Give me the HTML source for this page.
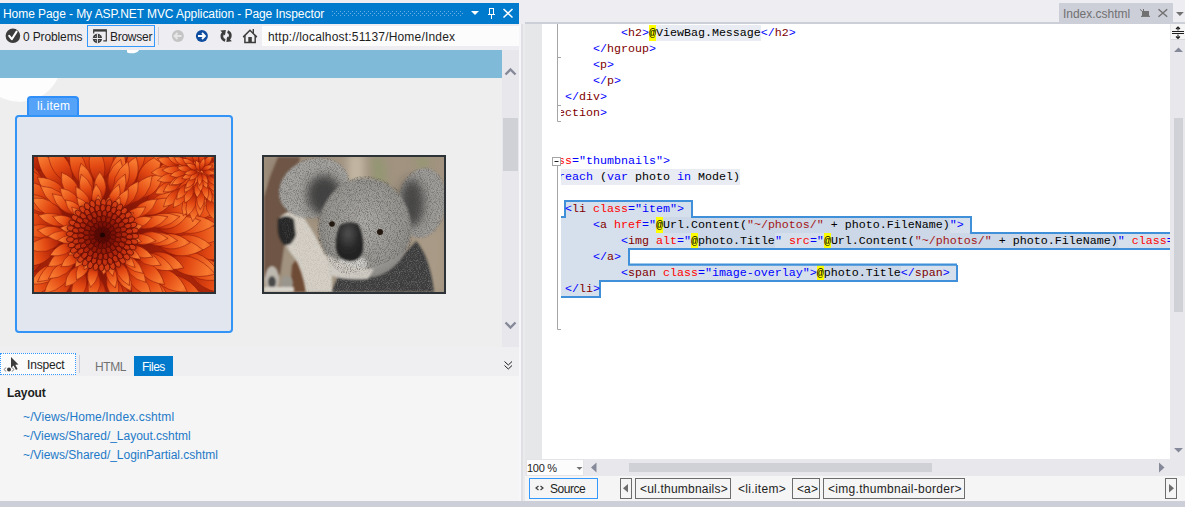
<!DOCTYPE html>
<html><head><meta charset="utf-8">
<style>
*{margin:0;padding:0;box-sizing:border-box}
html,body{width:1185px;height:507px;overflow:hidden;background:#eeeef2;font-family:"Liberation Sans",sans-serif;font-size:12px;color:#1e1e1e}
.a{position:absolute}
.t{position:absolute;white-space:nowrap;line-height:12px;font-size:12px;margin-top:1px}
svg{position:absolute;overflow:visible}
.code{position:absolute;font-family:"Liberation Mono",monospace;font-size:11.67px;line-height:16px;white-space:pre;color:#000}
.dl{color:#0000ff}.el{color:#800000}.at{color:#ff0000}.av{color:#0000ff}.kw{color:#0000ff}.st{color:#a31515}.bk{color:#000}.rg{color:#000}
.rz{color:#000}
</style></head><body>

<!-- ================= LEFT PANEL ================= -->
<div class="a" style="left:0;top:3px;width:519px;height:21px;background:#007acc"></div>
<div class="t" style="left:3px;top:7px;color:#fff;letter-spacing:-0.07px">Home Page - My ASP.NET MVC Application - Page Inspector</div>
<!-- grip -->
<svg style="left:0;top:0" width="519" height="24"><g fill="#69afe3"><rect x="332" y="11" width="1" height="1"/><rect x="336" y="11" width="1" height="1"/><rect x="340" y="11" width="1" height="1"/><rect x="344" y="11" width="1" height="1"/><rect x="348" y="11" width="1" height="1"/><rect x="352" y="11" width="1" height="1"/><rect x="356" y="11" width="1" height="1"/><rect x="360" y="11" width="1" height="1"/><rect x="364" y="11" width="1" height="1"/><rect x="368" y="11" width="1" height="1"/><rect x="372" y="11" width="1" height="1"/><rect x="376" y="11" width="1" height="1"/><rect x="380" y="11" width="1" height="1"/><rect x="384" y="11" width="1" height="1"/><rect x="388" y="11" width="1" height="1"/><rect x="392" y="11" width="1" height="1"/><rect x="396" y="11" width="1" height="1"/><rect x="400" y="11" width="1" height="1"/><rect x="404" y="11" width="1" height="1"/><rect x="408" y="11" width="1" height="1"/><rect x="412" y="11" width="1" height="1"/><rect x="416" y="11" width="1" height="1"/><rect x="420" y="11" width="1" height="1"/><rect x="424" y="11" width="1" height="1"/><rect x="428" y="11" width="1" height="1"/><rect x="432" y="11" width="1" height="1"/><rect x="436" y="11" width="1" height="1"/><rect x="440" y="11" width="1" height="1"/><rect x="444" y="11" width="1" height="1"/><rect x="448" y="11" width="1" height="1"/><rect x="452" y="11" width="1" height="1"/><rect x="456" y="11" width="1" height="1"/><rect x="460" y="11" width="1" height="1"/><rect x="334" y="13" width="1" height="1"/><rect x="338" y="13" width="1" height="1"/><rect x="342" y="13" width="1" height="1"/><rect x="346" y="13" width="1" height="1"/><rect x="350" y="13" width="1" height="1"/><rect x="354" y="13" width="1" height="1"/><rect x="358" y="13" width="1" height="1"/><rect x="362" y="13" width="1" height="1"/><rect x="366" y="13" width="1" height="1"/><rect x="370" y="13" width="1" height="1"/><rect x="374" y="13" width="1" height="1"/><rect x="378" y="13" width="1" height="1"/><rect x="382" y="13" width="1" height="1"/><rect x="386" y="13" width="1" height="1"/><rect x="390" y="13" width="1" height="1"/><rect x="394" y="13" width="1" height="1"/><rect x="398" y="13" width="1" height="1"/><rect x="402" y="13" width="1" height="1"/><rect x="406" y="13" width="1" height="1"/><rect x="410" y="13" width="1" height="1"/><rect x="414" y="13" width="1" height="1"/><rect x="418" y="13" width="1" height="1"/><rect x="422" y="13" width="1" height="1"/><rect x="426" y="13" width="1" height="1"/><rect x="430" y="13" width="1" height="1"/><rect x="434" y="13" width="1" height="1"/><rect x="438" y="13" width="1" height="1"/><rect x="442" y="13" width="1" height="1"/><rect x="446" y="13" width="1" height="1"/><rect x="450" y="13" width="1" height="1"/><rect x="454" y="13" width="1" height="1"/><rect x="458" y="13" width="1" height="1"/><rect x="462" y="13" width="1" height="1"/><rect x="332" y="15" width="1" height="1"/><rect x="336" y="15" width="1" height="1"/><rect x="340" y="15" width="1" height="1"/><rect x="344" y="15" width="1" height="1"/><rect x="348" y="15" width="1" height="1"/><rect x="352" y="15" width="1" height="1"/><rect x="356" y="15" width="1" height="1"/><rect x="360" y="15" width="1" height="1"/><rect x="364" y="15" width="1" height="1"/><rect x="368" y="15" width="1" height="1"/><rect x="372" y="15" width="1" height="1"/><rect x="376" y="15" width="1" height="1"/><rect x="380" y="15" width="1" height="1"/><rect x="384" y="15" width="1" height="1"/><rect x="388" y="15" width="1" height="1"/><rect x="392" y="15" width="1" height="1"/><rect x="396" y="15" width="1" height="1"/><rect x="400" y="15" width="1" height="1"/><rect x="404" y="15" width="1" height="1"/><rect x="408" y="15" width="1" height="1"/><rect x="412" y="15" width="1" height="1"/><rect x="416" y="15" width="1" height="1"/><rect x="420" y="15" width="1" height="1"/><rect x="424" y="15" width="1" height="1"/><rect x="428" y="15" width="1" height="1"/><rect x="432" y="15" width="1" height="1"/><rect x="436" y="15" width="1" height="1"/><rect x="440" y="15" width="1" height="1"/><rect x="444" y="15" width="1" height="1"/><rect x="448" y="15" width="1" height="1"/><rect x="452" y="15" width="1" height="1"/><rect x="456" y="15" width="1" height="1"/><rect x="460" y="15" width="1" height="1"/></g></svg>
<svg style="left:0;top:0" width="519" height="24">
  <path d="M471 11 H479 L475 15 Z" fill="#fff"/>
  <rect x="489.5" y="8.5" width="4" height="6" fill="none" stroke="#fff" stroke-width="1"/>
  <path d="M488 14.5 H495 M491.5 15 V19" stroke="#fff" stroke-width="1"/>
  <path d="M503.5 9 L512.5 17.5 M512.5 9 L503.5 17.5" stroke="#fff" stroke-width="1.5"/>
</svg>

<!-- toolbar -->
<svg style="left:0;top:24px" width="262" height="26">
  <circle cx="12.9" cy="11.8" r="7.3" fill="#3c3c3c"/>
  <path d="M9.2 11.8 L11.8 15.2 L16.6 7.6" stroke="#fff" stroke-width="2" fill="none" stroke-linecap="round" stroke-linejoin="round"/>
  <!-- browser icon -->
  <rect x="93.1" y="5.2" width="13.8" height="2.4" fill="#3c3c3c"/>
  <path d="M93.7 7 V9.6 M106.3 7 V16.8 H103.3" stroke="#3c3c3c" stroke-width="1.2" fill="none"/>
  <circle cx="97.4" cy="14.5" r="4.7" fill="#3c3c3c"/>
  <path d="M92.7 14.5 H102.1 M97.4 9.8 V19.2" stroke="#eeeef2" stroke-width="1"/>
  <path d="M95 12 L95.6 12.6 M99.8 12 L99.2 12.6 M95 17 L95.6 16.4 M99.8 17 L99.2 16.4" stroke="#eeeef2" stroke-width="0.8"/>
  <line x1="158.5" y1="3" x2="158.5" y2="21" stroke="#cccedb" stroke-width="1"/>
  <!-- back -->
  <circle cx="177.9" cy="12" r="6" fill="#c4c4c4"/>
  <path d="M181.5 12 H175 M177.5 9 L174.5 12 L177.5 15" stroke="#e6e6e6" stroke-width="1.8" fill="none"/>
  <!-- forward -->
  <circle cx="201.9" cy="12" r="6" fill="#0e4d9f"/>
  <path d="M198 12 H204.5 M202 9 L205 12 L202 15" stroke="#fff" stroke-width="1.8" fill="none"/>
  <!-- refresh -->
  <path d="M224.6 8.2 A4.3 4.3 0 0 0 225.2 16.4" stroke="#3c3c3c" stroke-width="2.7" fill="none"/>
  <path d="M220.3 6.6 L225.9 6.1 L224.9 11.6 Z" fill="#3c3c3c"/>
  <path d="M227.6 7.4 A4.3 4.3 0 0 1 227.0 15.6" stroke="#3c3c3c" stroke-width="2.7" fill="none"/>
  <path d="M226.3 17.9 L231.9 17.3 L227.3 12.4 Z" fill="#3c3c3c"/>
  <!-- home -->
  <path d="M243.6 12.6 L250 6.2 L256.4 12.6" stroke="#3c3c3c" stroke-width="1.5" fill="none" stroke-linecap="round"/>
  <path d="M244.9 11.5 V18.5 H255.2 V11.5" stroke="#3c3c3c" stroke-width="1.5" fill="none"/>
  <rect x="248.3" y="13" width="3.5" height="6" fill="#3c3c3c"/>
  <path d="M253.3 5 V9" stroke="#3c3c3c" stroke-width="1.4"/>
</svg>
<div class="t" style="left:23px;top:30px;letter-spacing:-0.13px">0 Problems</div>
<div class="a" style="left:87px;top:25px;width:68px;height:22px;border:1px solid #3399ff"></div>
<div class="t" style="left:110px;top:30px;letter-spacing:-0.27px">Browser</div>
<div class="a" style="left:262px;top:26px;width:257px;height:20px;background:#fcfcfc"></div>
<div class="t" style="left:268px;top:30px;letter-spacing:0.18px">http://localhost:51137/Home/Index</div>

<!-- page view -->
<div class="a" style="left:0;top:50px;width:502px;height:297px;background:#eeeeee;overflow:hidden">
  <div class="a" style="left:-22px;top:-32px;width:84px;height:84px;border-radius:50%;background:#fdfdfd"></div>
  <div class="a" style="left:0;top:0;width:502px;height:28px;background:#7fbad8"></div>
  <svg style="left:0;top:0" width="200" height="10"><path d="M127 0 V2.2 Q127.6 3.2 131 3.2 H134 Q137.5 3 139.2 0 Z" fill="#fff"/></svg>
</div>
<div class="a" style="left:502px;top:50px;width:17px;height:297px;background:#e8e8ec"></div>
<div class="a" style="left:503px;top:118px;width:15px;height:53px;background:#d0d1d7"></div>
<svg style="left:502px;top:50px" width="17" height="297">
  <path d="M3.5 24.5 L8.5 19.5 L13.5 24.5" stroke="#868999" stroke-width="2.4" fill="none"/>
  <path d="M3.5 272.5 L8.5 277.5 L13.5 272.5" stroke="#868999" stroke-width="2.4" fill="none"/>
</svg>

<div class="a" style="left:27px;top:96px;width:52px;height:21px;background:#55a3f9;border:2px solid #2f8ef8;border-bottom:none;border-radius:4px 4px 0 0"></div>
<div class="t" style="left:37px;top:99px;color:#fff;letter-spacing:0.27px">li.item</div>
<div class="a" style="left:15px;top:115px;width:218px;height:218px;border:2px solid #3394f7;border-radius:4px;background:#e1e6ef"></div>
<div class="a" style="left:32px;top:155px;width:184px;height:139px;border:2px solid #2d3236;background:#e0531e;overflow:hidden" id="flower"><svg style="left:0;top:0" width="180" height="135" viewBox="0 0 180 135">
<defs>
<radialGradient id="fbg" cx="68.5" cy="78" r="150" gradientUnits="userSpaceOnUse">
<stop offset="0" stop-color="#3a0604"/><stop offset="0.2" stop-color="#7a1206"/><stop offset="0.4" stop-color="#a02008"/><stop offset="1" stop-color="#b02a0a"/>
</radialGradient>
<linearGradient id="pet" x1="0" y1="0" x2="1" y2="0">
<stop offset="0" stop-color="#a41a06"/><stop offset="0.45" stop-color="#e24812"/><stop offset="0.85" stop-color="#f87a30"/><stop offset="1" stop-color="#f06a28"/>
</linearGradient>
<linearGradient id="petc" x1="0" y1="0" x2="1" y2="0">
<stop offset="0" stop-color="#7a0e04"/><stop offset="0.6" stop-color="#c82c0c"/><stop offset="1" stop-color="#e85a20"/>
</linearGradient>
<radialGradient id="cg"><stop offset="0" stop-color="#4a0804" stop-opacity="0.9"/><stop offset="0.6" stop-color="#7a1006" stop-opacity="0.7"/><stop offset="1" stop-color="#a01a0a" stop-opacity="0"/></radialGradient>
</defs>
<rect width="180" height="135" fill="url(#fbg)"/>
<path d="M0 0 Q9.5 -8.1 21.1 0 Q9.5 8.1 0 0 Z" fill="url(#pet)" stroke="#8a1606" stroke-width="0.5" transform="translate(-14.1 86.4) rotate(106)"/>
<path d="M0 0 Q8.6 -8.1 19.0 0 Q8.6 8.1 0 0 Z" fill="url(#pet)" stroke="#8a1606" stroke-width="0.5" transform="translate(-17.8 80.9) rotate(138)"/>
<path d="M0 0 Q9.3 -8.1 20.6 0 Q9.3 8.1 0 0 Z" fill="url(#pet)" stroke="#8a1606" stroke-width="0.5" transform="translate(-20.6 76.4) rotate(154)"/>
<path d="M0 0 Q9.7 -8.1 21.5 0 Q9.7 8.1 0 0 Z" fill="url(#pet)" stroke="#8a1606" stroke-width="0.5" transform="translate(-21.4 70.3) rotate(183)"/>
<path d="M0 0 Q10.3 -8.1 23.0 0 Q10.3 8.1 0 0 Z" fill="url(#pet)" stroke="#8a1606" stroke-width="0.5" transform="translate(-21.1 64.1) rotate(209)"/>
<path d="M0 0 Q8.8 -8.1 19.5 0 Q8.8 8.1 0 0 Z" fill="url(#pet)" stroke="#8a1606" stroke-width="0.5" transform="translate(-19.7 60.4) rotate(221)"/>
<path d="M0 0 Q8.8 -8.1 19.6 0 Q8.8 8.1 0 0 Z" fill="url(#pet)" stroke="#8a1606" stroke-width="0.5" transform="translate(-13.4 58.8) rotate(253)"/>
<path d="M0 0 Q9.5 -8.1 21.2 0 Q9.5 8.1 0 0 Z" fill="url(#pet)" stroke="#8a1606" stroke-width="0.5" transform="translate(-6.7 56.5) rotate(273)"/>
<path d="M0 0 Q9.8 -8.1 21.7 0 Q9.8 8.1 0 0 Z" fill="url(#pet)" stroke="#8a1606" stroke-width="0.5" transform="translate(-3.0 59.7) rotate(288)"/>
<path d="M0 0 Q9.3 -8.1 20.8 0 Q9.3 8.1 0 0 Z" fill="url(#pet)" stroke="#8a1606" stroke-width="0.5" transform="translate(2.7 62.5) rotate(320)"/>
<path d="M0 0 Q8.9 -8.1 19.9 0 Q8.9 8.1 0 0 Z" fill="url(#pet)" stroke="#8a1606" stroke-width="0.5" transform="translate(7.2 66.3) rotate(343)"/>
<path d="M0 0 Q9.9 -8.1 21.9 0 Q9.9 8.1 0 0 Z" fill="url(#pet)" stroke="#8a1606" stroke-width="0.5" transform="translate(7.1 73.3) rotate(371)"/>
<path d="M0 0 Q9.3 -8.1 20.6 0 Q9.3 8.1 0 0 Z" fill="url(#pet)" stroke="#8a1606" stroke-width="0.5" transform="translate(7.4 79.0) rotate(378)"/>
<path d="M0 0 Q8.6 -8.1 19.0 0 Q8.6 8.1 0 0 Z" fill="url(#pet)" stroke="#8a1606" stroke-width="0.5" transform="translate(0.5 82.7) rotate(411)"/>
<path d="M0 0 Q10.1 -8.1 22.5 0 Q10.1 8.1 0 0 Z" fill="url(#pet)" stroke="#8a1606" stroke-width="0.5" transform="translate(-3.4 87.4) rotate(434)"/>
<path d="M0 0 Q9.6 -8.1 21.3 0 Q9.6 8.1 0 0 Z" fill="url(#pet)" stroke="#8a1606" stroke-width="0.5" transform="translate(-8.6 87.8) rotate(454)"/>
<path d="M0 0 Q8.6 -7.1 19.0 0 Q8.6 7.1 0 0 Z" fill="url(#pet)" stroke="#8a1606" stroke-width="0.5" transform="translate(-20.1 74.6) rotate(167)"/>
<path d="M0 0 Q9.1 -7.1 20.3 0 Q9.1 7.1 0 0 Z" fill="url(#pet)" stroke="#8a1606" stroke-width="0.5" transform="translate(-19.3 70.9) rotate(188)"/>
<path d="M0 0 Q8.6 -7.1 19.1 0 Q8.6 7.1 0 0 Z" fill="url(#pet)" stroke="#8a1606" stroke-width="0.5" transform="translate(-15.5 65.9) rotate(217)"/>
<path d="M0 0 Q7.7 -7.1 17.0 0 Q7.7 7.1 0 0 Z" fill="url(#pet)" stroke="#8a1606" stroke-width="0.5" transform="translate(-13.7 63.3) rotate(231)"/>
<path d="M0 0 Q7.9 -7.1 17.5 0 Q7.9 7.1 0 0 Z" fill="url(#pet)" stroke="#8a1606" stroke-width="0.5" transform="translate(-9.5 60.5) rotate(257)"/>
<path d="M0 0 Q8.2 -7.1 18.3 0 Q8.2 7.1 0 0 Z" fill="url(#pet)" stroke="#8a1606" stroke-width="0.5" transform="translate(-3.5 60.8) rotate(285)"/>
<path d="M0 0 Q8.9 -7.1 19.8 0 Q8.9 7.1 0 0 Z" fill="url(#pet)" stroke="#8a1606" stroke-width="0.5" transform="translate(1.1 64.1) rotate(324)"/>
<path d="M0 0 Q8.9 -7.1 19.9 0 Q8.9 7.1 0 0 Z" fill="url(#pet)" stroke="#8a1606" stroke-width="0.5" transform="translate(1.7 68.8) rotate(340)"/>
<path d="M0 0 Q7.9 -7.1 17.5 0 Q7.9 7.1 0 0 Z" fill="url(#pet)" stroke="#8a1606" stroke-width="0.5" transform="translate(0.9 74.3) rotate(369)"/>
<path d="M0 0 Q7.9 -7.1 17.6 0 Q7.9 7.1 0 0 Z" fill="url(#pet)" stroke="#8a1606" stroke-width="0.5" transform="translate(0.8 77.7) rotate(394)"/>
<path d="M0 0 Q8.4 -7.1 18.7 0 Q8.4 7.1 0 0 Z" fill="url(#pet)" stroke="#8a1606" stroke-width="0.5" transform="translate(-2.3 80.5) rotate(414)"/>
<path d="M0 0 Q8.5 -7.1 18.9 0 Q8.5 7.1 0 0 Z" fill="url(#pet)" stroke="#8a1606" stroke-width="0.5" transform="translate(-8.3 83.3) rotate(452)"/>
<path d="M0 0 Q8.8 -7.1 19.5 0 Q8.8 7.1 0 0 Z" fill="url(#pet)" stroke="#8a1606" stroke-width="0.5" transform="translate(-11.6 80.0) rotate(481)"/>
<path d="M0 0 Q8.1 -7.1 18.1 0 Q8.1 7.1 0 0 Z" fill="url(#pet)" stroke="#8a1606" stroke-width="0.5" transform="translate(-17.3 79.2) rotate(501)"/>
<path d="M0 0 Q6.7 -6.2 15.0 0 Q6.7 6.2 0 0 Z" fill="url(#pet)" stroke="#8a1606" stroke-width="0.5" transform="translate(-4.6 74.7) rotate(32)"/>
<path d="M0 0 Q6.4 -6.2 14.3 0 Q6.4 6.2 0 0 Z" fill="url(#pet)" stroke="#8a1606" stroke-width="0.5" transform="translate(-5.6 76.9) rotate(57)"/>
<path d="M0 0 Q6.5 -6.2 14.4 0 Q6.5 6.2 0 0 Z" fill="url(#pet)" stroke="#8a1606" stroke-width="0.5" transform="translate(-8.3 76.5) rotate(92)"/>
<path d="M0 0 Q6.8 -6.2 15.1 0 Q6.8 6.2 0 0 Z" fill="url(#pet)" stroke="#8a1606" stroke-width="0.5" transform="translate(-12.3 76.9) rotate(125)"/>
<path d="M0 0 Q7.7 -6.2 17.0 0 Q7.7 6.2 0 0 Z" fill="url(#pet)" stroke="#8a1606" stroke-width="0.5" transform="translate(-13.0 74.3) rotate(150)"/>
<path d="M0 0 Q6.6 -6.2 14.6 0 Q6.6 6.2 0 0 Z" fill="url(#pet)" stroke="#8a1606" stroke-width="0.5" transform="translate(-13.8 70.7) rotate(192)"/>
<path d="M0 0 Q7.6 -6.2 17.0 0 Q7.6 6.2 0 0 Z" fill="url(#pet)" stroke="#8a1606" stroke-width="0.5" transform="translate(-12.6 69.0) rotate(210)"/>
<path d="M0 0 Q7.2 -6.2 16.0 0 Q7.2 6.2 0 0 Z" fill="url(#pet)" stroke="#8a1606" stroke-width="0.5" transform="translate(-9.8 68.3) rotate(251)"/>
<path d="M0 0 Q7.2 -6.2 16.0 0 Q7.2 6.2 0 0 Z" fill="url(#pet)" stroke="#8a1606" stroke-width="0.5" transform="translate(-7.6 65.8) rotate(266)"/>
<path d="M0 0 Q6.8 -6.2 15.2 0 Q6.8 6.2 0 0 Z" fill="url(#pet)" stroke="#8a1606" stroke-width="0.5" transform="translate(-3.0 66.4) rotate(315)"/>
<path d="M0 0 Q7.2 -6.2 16.0 0 Q7.2 6.2 0 0 Z" fill="url(#pet)" stroke="#8a1606" stroke-width="0.5" transform="translate(-3.7 70.1) rotate(340)"/>
<path d="M0 0 Q7.6 -6.2 16.9 0 Q7.6 6.2 0 0 Z" fill="url(#pet)" stroke="#8a1606" stroke-width="0.5" transform="translate(-2.7 72.9) rotate(366)"/>
<path d="M0 0 Q6.3 -5.3 14.0 0 Q6.3 5.3 0 0 Z" fill="url(#pet)" stroke="#8a1606" stroke-width="0.5" transform="translate(-5.2 71.9) rotate(363)"/>
<path d="M0 0 Q5.5 -5.3 12.1 0 Q5.5 5.3 0 0 Z" fill="url(#pet)" stroke="#8a1606" stroke-width="0.5" transform="translate(-6.5 72.8) rotate(386)"/>
<path d="M0 0 Q6.3 -5.3 13.9 0 Q6.3 5.3 0 0 Z" fill="url(#pet)" stroke="#8a1606" stroke-width="0.5" transform="translate(-7.7 72.6) rotate(418)"/>
<path d="M0 0 Q6.6 -5.3 14.7 0 Q6.6 5.3 0 0 Z" fill="url(#pet)" stroke="#8a1606" stroke-width="0.5" transform="translate(-8.4 73.3) rotate(474)"/>
<path d="M0 0 Q5.7 -5.3 12.7 0 Q5.7 5.3 0 0 Z" fill="url(#pet)" stroke="#8a1606" stroke-width="0.5" transform="translate(-8.8 72.6) rotate(499)"/>
<path d="M0 0 Q6.5 -5.3 14.5 0 Q6.5 5.3 0 0 Z" fill="url(#pet)" stroke="#8a1606" stroke-width="0.5" transform="translate(-8.4 72.1) rotate(534)"/>
<path d="M0 0 Q6.4 -5.3 14.2 0 Q6.4 5.3 0 0 Z" fill="url(#pet)" stroke="#8a1606" stroke-width="0.5" transform="translate(-9.3 71.2) rotate(576)"/>
<path d="M0 0 Q6.4 -5.3 14.2 0 Q6.4 5.3 0 0 Z" fill="url(#pet)" stroke="#8a1606" stroke-width="0.5" transform="translate(-9.0 70.0) rotate(609)"/>
<path d="M0 0 Q6.4 -5.3 14.2 0 Q6.4 5.3 0 0 Z" fill="url(#pet)" stroke="#8a1606" stroke-width="0.5" transform="translate(-7.6 70.5) rotate(640)"/>
<path d="M0 0 Q5.9 -5.3 13.1 0 Q5.9 5.3 0 0 Z" fill="url(#pet)" stroke="#8a1606" stroke-width="0.5" transform="translate(-6.0 70.1) rotate(684)"/>
<path d="M0 0 Q25.8 -23.1 57.4 0 Q25.8 23.1 0 0 Z" fill="url(#pet)" stroke="#8a1606" stroke-width="0.5" transform="translate(-7.7 123.8) rotate(144)"/>
<path d="M0 0 Q25.9 -23.1 57.6 0 Q25.9 23.1 0 0 Z" fill="url(#pet)" stroke="#8a1606" stroke-width="0.5" transform="translate(-13.8 113.5) rotate(162)"/>
<path d="M0 0 Q27.1 -23.1 60.1 0 Q27.1 23.1 0 0 Z" fill="url(#pet)" stroke="#8a1606" stroke-width="0.5" transform="translate(-21.4 79.5) rotate(182)"/>
<path d="M0 0 Q30.5 -23.1 67.8 0 Q30.5 23.1 0 0 Z" fill="url(#pet)" stroke="#8a1606" stroke-width="0.5" transform="translate(-16.2 60.1) rotate(184)"/>
<path d="M0 0 Q27.5 -23.1 61.2 0 Q27.5 23.1 0 0 Z" fill="url(#pet)" stroke="#8a1606" stroke-width="0.5" transform="translate(-8.9 35.8) rotate(216)"/>
<path d="M0 0 Q26.5 -23.1 58.9 0 Q26.5 23.1 0 0 Z" fill="url(#pet)" stroke="#8a1606" stroke-width="0.5" transform="translate(7.0 13.2) rotate(222)"/>
<path d="M0 0 Q26.6 -23.1 59.0 0 Q26.6 23.1 0 0 Z" fill="url(#pet)" stroke="#8a1606" stroke-width="0.5" transform="translate(20.3 5.6) rotate(238)"/>
<path d="M0 0 Q27.1 -23.1 60.2 0 Q27.1 23.1 0 0 Z" fill="url(#pet)" stroke="#8a1606" stroke-width="0.5" transform="translate(43.6 -4.9) rotate(260)"/>
<path d="M0 0 Q27.5 -23.1 61.0 0 Q27.5 23.1 0 0 Z" fill="url(#pet)" stroke="#8a1606" stroke-width="0.5" transform="translate(67.4 -10.3) rotate(276)"/>
<path d="M0 0 Q28.0 -23.1 62.3 0 Q28.0 23.1 0 0 Z" fill="url(#pet)" stroke="#8a1606" stroke-width="0.5" transform="translate(97.9 -4.9) rotate(290)"/>
<path d="M0 0 Q25.1 -23.1 55.8 0 Q25.1 23.1 0 0 Z" fill="url(#pet)" stroke="#8a1606" stroke-width="0.5" transform="translate(107.3 -0.7) rotate(291)"/>
<path d="M0 0 Q29.2 -23.1 64.8 0 Q29.2 23.1 0 0 Z" fill="url(#pet)" stroke="#8a1606" stroke-width="0.5" transform="translate(134.6 21.9) rotate(319)"/>
<path d="M0 0 Q28.2 -23.1 62.7 0 Q28.2 23.1 0 0 Z" fill="url(#pet)" stroke="#8a1606" stroke-width="0.5" transform="translate(146.2 38.2) rotate(333)"/>
<path d="M0 0 Q26.5 -23.1 58.9 0 Q26.5 23.1 0 0 Z" fill="url(#pet)" stroke="#8a1606" stroke-width="0.5" transform="translate(153.8 64.2) rotate(352)"/>
<path d="M0 0 Q28.2 -23.1 62.8 0 Q28.2 23.1 0 0 Z" fill="url(#pet)" stroke="#8a1606" stroke-width="0.5" transform="translate(157.6 80.2) rotate(362)"/>
<path d="M0 0 Q28.5 -23.1 63.4 0 Q28.5 23.1 0 0 Z" fill="url(#pet)" stroke="#8a1606" stroke-width="0.5" transform="translate(151.7 111.4) rotate(381)"/>
<path d="M0 0 Q27.6 -23.1 61.4 0 Q27.6 23.1 0 0 Z" fill="url(#pet)" stroke="#8a1606" stroke-width="0.5" transform="translate(140.6 128.5) rotate(398)"/>
<path d="M0 0 Q29.0 -23.1 64.5 0 Q29.0 23.1 0 0 Z" fill="url(#pet)" stroke="#8a1606" stroke-width="0.5" transform="translate(123.9 146.2) rotate(418)"/>
<path d="M0 0 Q28.2 -23.1 62.7 0 Q28.2 23.1 0 0 Z" fill="url(#pet)" stroke="#8a1606" stroke-width="0.5" transform="translate(99.2 162.4) rotate(426)"/>
<path d="M0 0 Q25.8 -23.1 57.3 0 Q25.8 23.1 0 0 Z" fill="url(#pet)" stroke="#8a1606" stroke-width="0.5" transform="translate(74.2 167.2) rotate(441)"/>
<path d="M0 0 Q25.5 -23.1 56.7 0 Q25.5 23.1 0 0 Z" fill="url(#pet)" stroke="#8a1606" stroke-width="0.5" transform="translate(58.0 163.7) rotate(453)"/>
<path d="M0 0 Q26.0 -23.1 57.7 0 Q26.0 23.1 0 0 Z" fill="url(#pet)" stroke="#8a1606" stroke-width="0.5" transform="translate(31.0 158.9) rotate(481)"/>
<path d="M0 0 Q30.0 -23.1 66.7 0 Q30.0 23.1 0 0 Z" fill="url(#pet)" stroke="#8a1606" stroke-width="0.5" transform="translate(10.3 144.9) rotate(485)"/>
<path d="M0 0 Q25.9 -21.5 57.5 0 Q25.9 21.5 0 0 Z" fill="url(#pet)" stroke="#8a1606" stroke-width="0.5" transform="translate(148.0 57.5) rotate(344)"/>
<path d="M0 0 Q25.6 -21.5 56.9 0 Q25.6 21.5 0 0 Z" fill="url(#pet)" stroke="#8a1606" stroke-width="0.5" transform="translate(149.2 90.6) rotate(363)"/>
<path d="M0 0 Q25.0 -21.5 55.6 0 Q25.0 21.5 0 0 Z" fill="url(#pet)" stroke="#8a1606" stroke-width="0.5" transform="translate(143.5 105.0) rotate(375)"/>
<path d="M0 0 Q25.6 -21.5 57.0 0 Q25.6 21.5 0 0 Z" fill="url(#pet)" stroke="#8a1606" stroke-width="0.5" transform="translate(130.7 125.7) rotate(398)"/>
<path d="M0 0 Q26.0 -21.5 57.8 0 Q26.0 21.5 0 0 Z" fill="url(#pet)" stroke="#8a1606" stroke-width="0.5" transform="translate(123.7 135.4) rotate(408)"/>
<path d="M0 0 Q28.4 -21.5 63.1 0 Q28.4 21.5 0 0 Z" fill="url(#pet)" stroke="#8a1606" stroke-width="0.5" transform="translate(106.8 150.8) rotate(427)"/>
<path d="M0 0 Q27.4 -21.5 60.9 0 Q27.4 21.5 0 0 Z" fill="url(#pet)" stroke="#8a1606" stroke-width="0.5" transform="translate(84.6 155.7) rotate(431)"/>
<path d="M0 0 Q28.1 -21.5 62.4 0 Q28.1 21.5 0 0 Z" fill="url(#pet)" stroke="#8a1606" stroke-width="0.5" transform="translate(60.8 156.5) rotate(454)"/>
<path d="M0 0 Q28.1 -21.5 62.5 0 Q28.1 21.5 0 0 Z" fill="url(#pet)" stroke="#8a1606" stroke-width="0.5" transform="translate(32.8 148.9) rotate(471)"/>
<path d="M0 0 Q23.7 -21.5 52.6 0 Q23.7 21.5 0 0 Z" fill="url(#pet)" stroke="#8a1606" stroke-width="0.5" transform="translate(16.5 140.2) rotate(483)"/>
<path d="M0 0 Q28.2 -21.5 62.7 0 Q28.2 21.5 0 0 Z" fill="url(#pet)" stroke="#8a1606" stroke-width="0.5" transform="translate(1.6 121.9) rotate(500)"/>
<path d="M0 0 Q27.8 -21.5 61.8 0 Q27.8 21.5 0 0 Z" fill="url(#pet)" stroke="#8a1606" stroke-width="0.5" transform="translate(-9.0 103.4) rotate(515)"/>
<path d="M0 0 Q25.1 -21.5 55.8 0 Q25.1 21.5 0 0 Z" fill="url(#pet)" stroke="#8a1606" stroke-width="0.5" transform="translate(-12.4 89.7) rotate(531)"/>
<path d="M0 0 Q24.0 -21.5 53.4 0 Q24.0 21.5 0 0 Z" fill="url(#pet)" stroke="#8a1606" stroke-width="0.5" transform="translate(-11.6 60.5) rotate(549)"/>
<path d="M0 0 Q24.2 -21.5 53.8 0 Q24.2 21.5 0 0 Z" fill="url(#pet)" stroke="#8a1606" stroke-width="0.5" transform="translate(-1.7 41.1) rotate(561)"/>
<path d="M0 0 Q24.9 -21.5 55.4 0 Q24.9 21.5 0 0 Z" fill="url(#pet)" stroke="#8a1606" stroke-width="0.5" transform="translate(6.7 28.6) rotate(576)"/>
<path d="M0 0 Q24.3 -21.5 54.0 0 Q24.3 21.5 0 0 Z" fill="url(#pet)" stroke="#8a1606" stroke-width="0.5" transform="translate(30.4 8.3) rotate(601)"/>
<path d="M0 0 Q23.4 -21.5 52.1 0 Q23.4 21.5 0 0 Z" fill="url(#pet)" stroke="#8a1606" stroke-width="0.5" transform="translate(45.4 3.1) rotate(609)"/>
<path d="M0 0 Q25.8 -21.5 57.4 0 Q25.8 21.5 0 0 Z" fill="url(#pet)" stroke="#8a1606" stroke-width="0.5" transform="translate(71.9 -2.5) rotate(627)"/>
<path d="M0 0 Q25.6 -21.5 56.9 0 Q25.6 21.5 0 0 Z" fill="url(#pet)" stroke="#8a1606" stroke-width="0.5" transform="translate(95.5 4.0) rotate(655)"/>
<path d="M0 0 Q26.0 -21.5 57.8 0 Q26.0 21.5 0 0 Z" fill="url(#pet)" stroke="#8a1606" stroke-width="0.5" transform="translate(110.9 8.2) rotate(660)"/>
<path d="M0 0 Q27.7 -21.5 61.5 0 Q27.7 21.5 0 0 Z" fill="url(#pet)" stroke="#8a1606" stroke-width="0.5" transform="translate(130.5 23.9) rotate(676)"/>
<path d="M0 0 Q25.2 -21.5 55.9 0 Q25.2 21.5 0 0 Z" fill="url(#pet)" stroke="#8a1606" stroke-width="0.5" transform="translate(141.6 43.5) rotate(693)"/>
<path d="M0 0 Q22.8 -19.9 50.8 0 Q22.8 19.9 0 0 Z" fill="url(#pet)" stroke="#8a1606" stroke-width="0.5" transform="translate(136.7 97.4) rotate(20)"/>
<path d="M0 0 Q25.8 -19.9 57.3 0 Q25.8 19.9 0 0 Z" fill="url(#pet)" stroke="#8a1606" stroke-width="0.5" transform="translate(128.3 116.2) rotate(38)"/>
<path d="M0 0 Q23.0 -19.9 51.2 0 Q23.0 19.9 0 0 Z" fill="url(#pet)" stroke="#8a1606" stroke-width="0.5" transform="translate(110.7 136.1) rotate(50)"/>
<path d="M0 0 Q22.9 -19.9 50.8 0 Q22.9 19.9 0 0 Z" fill="url(#pet)" stroke="#8a1606" stroke-width="0.5" transform="translate(94.9 144.2) rotate(67)"/>
<path d="M0 0 Q22.8 -19.9 50.6 0 Q22.8 19.9 0 0 Z" fill="url(#pet)" stroke="#8a1606" stroke-width="0.5" transform="translate(69.0 152.5) rotate(90)"/>
<path d="M0 0 Q21.6 -19.9 48.0 0 Q21.6 19.9 0 0 Z" fill="url(#pet)" stroke="#8a1606" stroke-width="0.5" transform="translate(48.6 147.1) rotate(104)"/>
<path d="M0 0 Q22.6 -19.9 50.2 0 Q22.6 19.9 0 0 Z" fill="url(#pet)" stroke="#8a1606" stroke-width="0.5" transform="translate(36.0 142.9) rotate(117)"/>
<path d="M0 0 Q22.0 -19.9 49.0 0 Q22.0 19.9 0 0 Z" fill="url(#pet)" stroke="#8a1606" stroke-width="0.5" transform="translate(19.3 128.7) rotate(130)"/>
<path d="M0 0 Q23.1 -19.9 51.3 0 Q23.1 19.9 0 0 Z" fill="url(#pet)" stroke="#8a1606" stroke-width="0.5" transform="translate(7.5 114.0) rotate(142)"/>
<path d="M0 0 Q25.2 -19.9 56.0 0 Q25.2 19.9 0 0 Z" fill="url(#pet)" stroke="#8a1606" stroke-width="0.5" transform="translate(-1.7 97.9) rotate(165)"/>
<path d="M0 0 Q23.5 -19.9 52.2 0 Q23.5 19.9 0 0 Z" fill="url(#pet)" stroke="#8a1606" stroke-width="0.5" transform="translate(-4.7 71.9) rotate(191)"/>
<path d="M0 0 Q25.1 -19.9 55.8 0 Q25.1 19.9 0 0 Z" fill="url(#pet)" stroke="#8a1606" stroke-width="0.5" transform="translate(-2.5 55.2) rotate(192)"/>
<path d="M0 0 Q25.9 -19.9 57.5 0 Q25.9 19.9 0 0 Z" fill="url(#pet)" stroke="#8a1606" stroke-width="0.5" transform="translate(12.2 35.0) rotate(223)"/>
<path d="M0 0 Q22.3 -19.9 49.5 0 Q22.3 19.9 0 0 Z" fill="url(#pet)" stroke="#8a1606" stroke-width="0.5" transform="translate(24.8 18.8) rotate(239)"/>
<path d="M0 0 Q25.5 -19.9 56.6 0 Q25.5 19.9 0 0 Z" fill="url(#pet)" stroke="#8a1606" stroke-width="0.5" transform="translate(42.4 10.2) rotate(254)"/>
<path d="M0 0 Q24.9 -19.9 55.3 0 Q24.9 19.9 0 0 Z" fill="url(#pet)" stroke="#8a1606" stroke-width="0.5" transform="translate(66.3 5.1) rotate(275)"/>
<path d="M0 0 Q22.2 -19.9 49.4 0 Q22.2 19.9 0 0 Z" fill="url(#pet)" stroke="#8a1606" stroke-width="0.5" transform="translate(85.0 8.4) rotate(276)"/>
<path d="M0 0 Q24.3 -19.9 54.0 0 Q24.3 19.9 0 0 Z" fill="url(#pet)" stroke="#8a1606" stroke-width="0.5" transform="translate(100.1 14.3) rotate(302)"/>
<path d="M0 0 Q24.0 -19.9 53.2 0 Q24.0 19.9 0 0 Z" fill="url(#pet)" stroke="#8a1606" stroke-width="0.5" transform="translate(120.6 26.6) rotate(318)"/>
<path d="M0 0 Q24.0 -19.9 53.4 0 Q24.0 19.9 0 0 Z" fill="url(#pet)" stroke="#8a1606" stroke-width="0.5" transform="translate(129.4 36.2) rotate(329)"/>
<path d="M0 0 Q25.1 -19.9 55.9 0 Q25.1 19.9 0 0 Z" fill="url(#pet)" stroke="#8a1606" stroke-width="0.5" transform="translate(140.0 61.8) rotate(340)"/>
<path d="M0 0 Q25.1 -19.9 55.8 0 Q25.1 19.9 0 0 Z" fill="url(#pet)" stroke="#8a1606" stroke-width="0.5" transform="translate(139.4 78.9) rotate(357)"/>
<path d="M0 0 Q21.5 -18.3 47.9 0 Q21.5 18.3 0 0 Z" fill="url(#pet)" stroke="#8a1606" stroke-width="0.5" transform="translate(84.4 143.0) rotate(76)"/>
<path d="M0 0 Q22.6 -18.3 50.2 0 Q22.6 18.3 0 0 Z" fill="url(#pet)" stroke="#8a1606" stroke-width="0.5" transform="translate(68.5 143.7) rotate(94)"/>
<path d="M0 0 Q21.0 -18.3 46.6 0 Q21.0 18.3 0 0 Z" fill="url(#pet)" stroke="#8a1606" stroke-width="0.5" transform="translate(48.9 138.2) rotate(102)"/>
<path d="M0 0 Q19.9 -18.3 44.3 0 Q19.9 18.3 0 0 Z" fill="url(#pet)" stroke="#8a1606" stroke-width="0.5" transform="translate(31.3 130.3) rotate(126)"/>
<path d="M0 0 Q22.9 -18.3 50.9 0 Q22.9 18.3 0 0 Z" fill="url(#pet)" stroke="#8a1606" stroke-width="0.5" transform="translate(23.3 123.3) rotate(138)"/>
<path d="M0 0 Q21.9 -18.3 48.7 0 Q21.9 18.3 0 0 Z" fill="url(#pet)" stroke="#8a1606" stroke-width="0.5" transform="translate(9.3 102.6) rotate(158)"/>
<path d="M0 0 Q20.7 -18.3 46.1 0 Q20.7 18.3 0 0 Z" fill="url(#pet)" stroke="#8a1606" stroke-width="0.5" transform="translate(5.7 87.1) rotate(178)"/>
<path d="M0 0 Q21.9 -18.3 48.6 0 Q21.9 18.3 0 0 Z" fill="url(#pet)" stroke="#8a1606" stroke-width="0.5" transform="translate(3.6 62.8) rotate(185)"/>
<path d="M0 0 Q21.0 -18.3 46.8 0 Q21.0 18.3 0 0 Z" fill="url(#pet)" stroke="#8a1606" stroke-width="0.5" transform="translate(9.5 46.6) rotate(207)"/>
<path d="M0 0 Q22.4 -18.3 49.8 0 Q22.4 18.3 0 0 Z" fill="url(#pet)" stroke="#8a1606" stroke-width="0.5" transform="translate(16.1 36.7) rotate(214)"/>
<path d="M0 0 Q20.4 -18.3 45.4 0 Q20.4 18.3 0 0 Z" fill="url(#pet)" stroke="#8a1606" stroke-width="0.5" transform="translate(30.2 25.4) rotate(241)"/>
<path d="M0 0 Q23.0 -18.3 51.0 0 Q23.0 18.3 0 0 Z" fill="url(#pet)" stroke="#8a1606" stroke-width="0.5" transform="translate(54.0 14.7) rotate(263)"/>
<path d="M0 0 Q20.0 -18.3 44.4 0 Q20.0 18.3 0 0 Z" fill="url(#pet)" stroke="#8a1606" stroke-width="0.5" transform="translate(65.7 11.5) rotate(267)"/>
<path d="M0 0 Q21.2 -18.3 47.1 0 Q21.2 18.3 0 0 Z" fill="url(#pet)" stroke="#8a1606" stroke-width="0.5" transform="translate(81.6 14.4) rotate(281)"/>
<path d="M0 0 Q23.6 -18.3 52.4 0 Q23.6 18.3 0 0 Z" fill="url(#pet)" stroke="#8a1606" stroke-width="0.5" transform="translate(100.1 21.9) rotate(296)"/>
<path d="M0 0 Q20.4 -18.3 45.3 0 Q20.4 18.3 0 0 Z" fill="url(#pet)" stroke="#8a1606" stroke-width="0.5" transform="translate(114.6 30.8) rotate(320)"/>
<path d="M0 0 Q21.1 -18.3 47.0 0 Q21.1 18.3 0 0 Z" fill="url(#pet)" stroke="#8a1606" stroke-width="0.5" transform="translate(130.3 55.4) rotate(346)"/>
<path d="M0 0 Q22.5 -18.3 49.9 0 Q22.5 18.3 0 0 Z" fill="url(#pet)" stroke="#8a1606" stroke-width="0.5" transform="translate(132.2 67.7) rotate(359)"/>
<path d="M0 0 Q20.1 -18.3 44.6 0 Q20.1 18.3 0 0 Z" fill="url(#pet)" stroke="#8a1606" stroke-width="0.5" transform="translate(132.7 85.9) rotate(363)"/>
<path d="M0 0 Q24.0 -18.3 53.3 0 Q24.0 18.3 0 0 Z" fill="url(#pet)" stroke="#8a1606" stroke-width="0.5" transform="translate(130.5 101.5) rotate(377)"/>
<path d="M0 0 Q20.7 -18.3 46.0 0 Q20.7 18.3 0 0 Z" fill="url(#pet)" stroke="#8a1606" stroke-width="0.5" transform="translate(118.5 118.0) rotate(399)"/>
<path d="M0 0 Q23.4 -18.3 52.1 0 Q23.4 18.3 0 0 Z" fill="url(#pet)" stroke="#8a1606" stroke-width="0.5" transform="translate(105.6 133.5) rotate(422)"/>
<path d="M0 0 Q21.0 -16.8 46.7 0 Q21.0 16.8 0 0 Z" fill="url(#pet)" stroke="#8a1606" stroke-width="0.5" transform="translate(31.5 31.9) rotate(232)"/>
<path d="M0 0 Q21.1 -16.8 47.0 0 Q21.1 16.8 0 0 Z" fill="url(#pet)" stroke="#8a1606" stroke-width="0.5" transform="translate(38.5 28.1) rotate(238)"/>
<path d="M0 0 Q21.8 -16.8 48.5 0 Q21.8 16.8 0 0 Z" fill="url(#pet)" stroke="#8a1606" stroke-width="0.5" transform="translate(60.0 22.2) rotate(254)"/>
<path d="M0 0 Q19.3 -16.8 42.9 0 Q19.3 16.8 0 0 Z" fill="url(#pet)" stroke="#8a1606" stroke-width="0.5" transform="translate(71.0 20.9) rotate(270)"/>
<path d="M0 0 Q20.8 -16.8 46.1 0 Q20.8 16.8 0 0 Z" fill="url(#pet)" stroke="#8a1606" stroke-width="0.5" transform="translate(93.5 24.3) rotate(291)"/>
<path d="M0 0 Q18.8 -16.8 41.7 0 Q18.8 16.8 0 0 Z" fill="url(#pet)" stroke="#8a1606" stroke-width="0.5" transform="translate(103.1 32.0) rotate(305)"/>
<path d="M0 0 Q20.1 -16.8 44.7 0 Q20.1 16.8 0 0 Z" fill="url(#pet)" stroke="#8a1606" stroke-width="0.5" transform="translate(112.7 43.4) rotate(328)"/>
<path d="M0 0 Q19.9 -16.8 44.3 0 Q19.9 16.8 0 0 Z" fill="url(#pet)" stroke="#8a1606" stroke-width="0.5" transform="translate(123.4 56.8) rotate(347)"/>
<path d="M0 0 Q19.5 -16.8 43.3 0 Q19.5 16.8 0 0 Z" fill="url(#pet)" stroke="#8a1606" stroke-width="0.5" transform="translate(124.3 72.6) rotate(348)"/>
<path d="M0 0 Q20.4 -16.8 45.3 0 Q20.4 16.8 0 0 Z" fill="url(#pet)" stroke="#8a1606" stroke-width="0.5" transform="translate(123.8 88.1) rotate(366)"/>
<path d="M0 0 Q19.8 -16.8 43.9 0 Q19.8 16.8 0 0 Z" fill="url(#pet)" stroke="#8a1606" stroke-width="0.5" transform="translate(116.5 111.1) rotate(393)"/>
<path d="M0 0 Q18.4 -16.8 40.8 0 Q18.4 16.8 0 0 Z" fill="url(#pet)" stroke="#8a1606" stroke-width="0.5" transform="translate(107.0 119.8) rotate(405)"/>
<path d="M0 0 Q20.1 -16.8 44.8 0 Q20.1 16.8 0 0 Z" fill="url(#pet)" stroke="#8a1606" stroke-width="0.5" transform="translate(96.9 129.9) rotate(415)"/>
<path d="M0 0 Q19.2 -16.8 42.7 0 Q19.2 16.8 0 0 Z" fill="url(#pet)" stroke="#8a1606" stroke-width="0.5" transform="translate(77.5 136.0) rotate(437)"/>
<path d="M0 0 Q22.0 -16.8 48.8 0 Q22.0 16.8 0 0 Z" fill="url(#pet)" stroke="#8a1606" stroke-width="0.5" transform="translate(64.8 134.8) rotate(453)"/>
<path d="M0 0 Q18.2 -16.8 40.5 0 Q18.2 16.8 0 0 Z" fill="url(#pet)" stroke="#8a1606" stroke-width="0.5" transform="translate(42.7 130.8) rotate(468)"/>
<path d="M0 0 Q20.5 -16.8 45.5 0 Q20.5 16.8 0 0 Z" fill="url(#pet)" stroke="#8a1606" stroke-width="0.5" transform="translate(29.9 122.4) rotate(491)"/>
<path d="M0 0 Q21.4 -16.8 47.6 0 Q21.4 16.8 0 0 Z" fill="url(#pet)" stroke="#8a1606" stroke-width="0.5" transform="translate(24.8 114.3) rotate(507)"/>
<path d="M0 0 Q18.6 -16.8 41.2 0 Q18.6 16.8 0 0 Z" fill="url(#pet)" stroke="#8a1606" stroke-width="0.5" transform="translate(11.3 93.1) rotate(521)"/>
<path d="M0 0 Q21.9 -16.8 48.7 0 Q21.9 16.8 0 0 Z" fill="url(#pet)" stroke="#8a1606" stroke-width="0.5" transform="translate(11.4 83.4) rotate(537)"/>
<path d="M0 0 Q20.0 -16.8 44.3 0 Q20.0 16.8 0 0 Z" fill="url(#pet)" stroke="#8a1606" stroke-width="0.5" transform="translate(13.0 61.5) rotate(561)"/>
<path d="M0 0 Q19.0 -16.8 42.3 0 Q19.0 16.8 0 0 Z" fill="url(#pet)" stroke="#8a1606" stroke-width="0.5" transform="translate(21.1 49.2) rotate(576)"/>
<path d="M0 0 Q17.3 -15.2 38.4 0 Q17.3 15.2 0 0 Z" fill="url(#pet)" stroke="#8a1606" stroke-width="0.5" transform="translate(111.8 55.6) rotate(327)"/>
<path d="M0 0 Q16.6 -15.2 36.9 0 Q16.6 15.2 0 0 Z" fill="url(#pet)" stroke="#8a1606" stroke-width="0.5" transform="translate(118.1 69.0) rotate(343)"/>
<path d="M0 0 Q17.2 -15.2 38.2 0 Q17.2 15.2 0 0 Z" fill="url(#pet)" stroke="#8a1606" stroke-width="0.5" transform="translate(118.2 83.0) rotate(364)"/>
<path d="M0 0 Q18.0 -15.2 40.1 0 Q18.0 15.2 0 0 Z" fill="url(#pet)" stroke="#8a1606" stroke-width="0.5" transform="translate(112.2 97.1) rotate(380)"/>
<path d="M0 0 Q18.1 -15.2 40.2 0 Q18.1 15.2 0 0 Z" fill="url(#pet)" stroke="#8a1606" stroke-width="0.5" transform="translate(104.4 113.1) rotate(410)"/>
<path d="M0 0 Q18.9 -15.2 42.1 0 Q18.9 15.2 0 0 Z" fill="url(#pet)" stroke="#8a1606" stroke-width="0.5" transform="translate(96.9 117.4) rotate(422)"/>
<path d="M0 0 Q18.8 -15.2 41.8 0 Q18.8 15.2 0 0 Z" fill="url(#pet)" stroke="#8a1606" stroke-width="0.5" transform="translate(83.2 123.4) rotate(432)"/>
<path d="M0 0 Q19.7 -15.2 43.8 0 Q19.7 15.2 0 0 Z" fill="url(#pet)" stroke="#8a1606" stroke-width="0.5" transform="translate(68.2 126.6) rotate(453)"/>
<path d="M0 0 Q17.9 -15.2 39.8 0 Q17.9 15.2 0 0 Z" fill="url(#pet)" stroke="#8a1606" stroke-width="0.5" transform="translate(55.7 124.0) rotate(463)"/>
<path d="M0 0 Q19.0 -15.2 42.3 0 Q19.0 15.2 0 0 Z" fill="url(#pet)" stroke="#8a1606" stroke-width="0.5" transform="translate(39.2 116.5) rotate(492)"/>
<path d="M0 0 Q17.5 -15.2 38.9 0 Q17.5 15.2 0 0 Z" fill="url(#pet)" stroke="#8a1606" stroke-width="0.5" transform="translate(30.0 107.4) rotate(510)"/>
<path d="M0 0 Q19.1 -15.2 42.5 0 Q19.1 15.2 0 0 Z" fill="url(#pet)" stroke="#8a1606" stroke-width="0.5" transform="translate(22.1 92.2) rotate(518)"/>
<path d="M0 0 Q17.0 -15.2 37.9 0 Q17.0 15.2 0 0 Z" fill="url(#pet)" stroke="#8a1606" stroke-width="0.5" transform="translate(17.3 82.6) rotate(535)"/>
<path d="M0 0 Q19.8 -15.2 44.0 0 Q19.8 15.2 0 0 Z" fill="url(#pet)" stroke="#8a1606" stroke-width="0.5" transform="translate(20.2 68.4) rotate(554)"/>
<path d="M0 0 Q19.9 -15.2 44.2 0 Q19.9 15.2 0 0 Z" fill="url(#pet)" stroke="#8a1606" stroke-width="0.5" transform="translate(24.9 55.2) rotate(563)"/>
<path d="M0 0 Q17.8 -15.2 39.5 0 Q17.8 15.2 0 0 Z" fill="url(#pet)" stroke="#8a1606" stroke-width="0.5" transform="translate(34.5 44.4) rotate(578)"/>
<path d="M0 0 Q20.0 -15.2 44.4 0 Q20.0 15.2 0 0 Z" fill="url(#pet)" stroke="#8a1606" stroke-width="0.5" transform="translate(50.5 30.1) rotate(613)"/>
<path d="M0 0 Q19.8 -15.2 43.9 0 Q19.8 15.2 0 0 Z" fill="url(#pet)" stroke="#8a1606" stroke-width="0.5" transform="translate(65.9 29.2) rotate(622)"/>
<path d="M0 0 Q17.7 -15.2 39.4 0 Q17.7 15.2 0 0 Z" fill="url(#pet)" stroke="#8a1606" stroke-width="0.5" transform="translate(78.6 31.4) rotate(645)"/>
<path d="M0 0 Q16.4 -15.2 36.4 0 Q16.4 15.2 0 0 Z" fill="url(#pet)" stroke="#8a1606" stroke-width="0.5" transform="translate(89.7 33.9) rotate(650)"/>
<path d="M0 0 Q16.8 -15.2 37.4 0 Q16.8 15.2 0 0 Z" fill="url(#pet)" stroke="#8a1606" stroke-width="0.5" transform="translate(101.2 41.5) rotate(679)"/>
<path d="M0 0 Q17.3 -13.6 38.4 0 Q17.3 13.6 0 0 Z" fill="url(#pet)" stroke="#8a1606" stroke-width="0.5" transform="translate(108.3 66.8) rotate(349)"/>
<path d="M0 0 Q15.8 -13.6 35.2 0 Q15.8 13.6 0 0 Z" fill="url(#pet)" stroke="#8a1606" stroke-width="0.5" transform="translate(108.5 81.1) rotate(364)"/>
<path d="M0 0 Q17.5 -13.6 38.9 0 Q17.5 13.6 0 0 Z" fill="url(#pet)" stroke="#8a1606" stroke-width="0.5" transform="translate(104.6 96.7) rotate(385)"/>
<path d="M0 0 Q17.1 -13.6 38.0 0 Q17.1 13.6 0 0 Z" fill="url(#pet)" stroke="#8a1606" stroke-width="0.5" transform="translate(101.9 102.7) rotate(401)"/>
<path d="M0 0 Q17.6 -13.6 39.1 0 Q17.6 13.6 0 0 Z" fill="url(#pet)" stroke="#8a1606" stroke-width="0.5" transform="translate(91.7 110.6) rotate(408)"/>
<path d="M0 0 Q15.7 -13.6 34.9 0 Q15.7 13.6 0 0 Z" fill="url(#pet)" stroke="#8a1606" stroke-width="0.5" transform="translate(79.8 119.4) rotate(441)"/>
<path d="M0 0 Q15.5 -13.6 34.4 0 Q15.5 13.6 0 0 Z" fill="url(#pet)" stroke="#8a1606" stroke-width="0.5" transform="translate(66.3 121.7) rotate(455)"/>
<path d="M0 0 Q14.6 -13.6 32.5 0 Q14.6 13.6 0 0 Z" fill="url(#pet)" stroke="#8a1606" stroke-width="0.5" transform="translate(50.9 115.2) rotate(472)"/>
<path d="M0 0 Q17.7 -13.6 39.3 0 Q17.7 13.6 0 0 Z" fill="url(#pet)" stroke="#8a1606" stroke-width="0.5" transform="translate(38.4 109.5) rotate(496)"/>
<path d="M0 0 Q17.7 -13.6 39.4 0 Q17.7 13.6 0 0 Z" fill="url(#pet)" stroke="#8a1606" stroke-width="0.5" transform="translate(35.3 101.8) rotate(504)"/>
<path d="M0 0 Q16.0 -13.6 35.6 0 Q16.0 13.6 0 0 Z" fill="url(#pet)" stroke="#8a1606" stroke-width="0.5" transform="translate(27.5 84.0) rotate(528)"/>
<path d="M0 0 Q17.2 -13.6 38.3 0 Q17.2 13.6 0 0 Z" fill="url(#pet)" stroke="#8a1606" stroke-width="0.5" transform="translate(25.0 74.1) rotate(540)"/>
<path d="M0 0 Q16.6 -13.6 36.9 0 Q16.6 13.6 0 0 Z" fill="url(#pet)" stroke="#8a1606" stroke-width="0.5" transform="translate(29.5 59.4) rotate(570)"/>
<path d="M0 0 Q17.2 -13.6 38.1 0 Q17.2 13.6 0 0 Z" fill="url(#pet)" stroke="#8a1606" stroke-width="0.5" transform="translate(36.7 51.8) rotate(577)"/>
<path d="M0 0 Q15.4 -13.6 34.3 0 Q15.4 13.6 0 0 Z" fill="url(#pet)" stroke="#8a1606" stroke-width="0.5" transform="translate(45.1 44.7) rotate(599)"/>
<path d="M0 0 Q15.7 -13.6 34.8 0 Q15.7 13.6 0 0 Z" fill="url(#pet)" stroke="#8a1606" stroke-width="0.5" transform="translate(56.6 39.7) rotate(614)"/>
<path d="M0 0 Q15.5 -13.6 34.4 0 Q15.5 13.6 0 0 Z" fill="url(#pet)" stroke="#8a1606" stroke-width="0.5" transform="translate(76.0 35.2) rotate(648)"/>
<path d="M0 0 Q16.9 -13.6 37.6 0 Q16.9 13.6 0 0 Z" fill="url(#pet)" stroke="#8a1606" stroke-width="0.5" transform="translate(81.6 39.9) rotate(649)"/>
<path d="M0 0 Q16.6 -13.6 36.9 0 Q16.6 13.6 0 0 Z" fill="url(#pet)" stroke="#8a1606" stroke-width="0.5" transform="translate(95.1 47.0) rotate(669)"/>
<path d="M0 0 Q16.8 -13.6 37.3 0 Q16.8 13.6 0 0 Z" fill="url(#pet)" stroke="#8a1606" stroke-width="0.5" transform="translate(106.0 57.1) rotate(696)"/>
<path d="M0 0 Q13.9 -12.0 31.0 0 Q13.9 12.0 0 0 Z" fill="url(#pet)" stroke="#8a1606" stroke-width="0.5" transform="translate(91.3 102.4) rotate(48)"/>
<path d="M0 0 Q13.6 -12.0 30.1 0 Q13.6 12.0 0 0 Z" fill="url(#pet)" stroke="#8a1606" stroke-width="0.5" transform="translate(82.5 107.9) rotate(61)"/>
<path d="M0 0 Q13.8 -12.0 30.7 0 Q13.8 12.0 0 0 Z" fill="url(#pet)" stroke="#8a1606" stroke-width="0.5" transform="translate(75.9 113.0) rotate(79)"/>
<path d="M0 0 Q13.5 -12.0 30.1 0 Q13.5 12.0 0 0 Z" fill="url(#pet)" stroke="#8a1606" stroke-width="0.5" transform="translate(62.6 113.7) rotate(100)"/>
<path d="M0 0 Q13.2 -12.0 29.2 0 Q13.2 12.0 0 0 Z" fill="url(#pet)" stroke="#8a1606" stroke-width="0.5" transform="translate(49.8 107.4) rotate(130)"/>
<path d="M0 0 Q15.5 -12.0 34.4 0 Q15.5 12.0 0 0 Z" fill="url(#pet)" stroke="#8a1606" stroke-width="0.5" transform="translate(42.1 101.7) rotate(144)"/>
<path d="M0 0 Q13.4 -12.0 29.8 0 Q13.4 12.0 0 0 Z" fill="url(#pet)" stroke="#8a1606" stroke-width="0.5" transform="translate(38.8 93.3) rotate(147)"/>
<path d="M0 0 Q13.9 -12.0 30.9 0 Q13.9 12.0 0 0 Z" fill="url(#pet)" stroke="#8a1606" stroke-width="0.5" transform="translate(33.9 77.4) rotate(188)"/>
<path d="M0 0 Q15.1 -12.0 33.5 0 Q15.1 12.0 0 0 Z" fill="url(#pet)" stroke="#8a1606" stroke-width="0.5" transform="translate(36.3 67.0) rotate(195)"/>
<path d="M0 0 Q14.6 -12.0 32.5 0 Q14.6 12.0 0 0 Z" fill="url(#pet)" stroke="#8a1606" stroke-width="0.5" transform="translate(43.0 57.6) rotate(220)"/>
<path d="M0 0 Q13.4 -12.0 29.9 0 Q13.4 12.0 0 0 Z" fill="url(#pet)" stroke="#8a1606" stroke-width="0.5" transform="translate(47.0 52.1) rotate(225)"/>
<path d="M0 0 Q13.4 -12.0 29.9 0 Q13.4 12.0 0 0 Z" fill="url(#pet)" stroke="#8a1606" stroke-width="0.5" transform="translate(56.4 45.5) rotate(252)"/>
<path d="M0 0 Q13.4 -12.0 29.8 0 Q13.4 12.0 0 0 Z" fill="url(#pet)" stroke="#8a1606" stroke-width="0.5" transform="translate(66.2 44.5) rotate(269)"/>
<path d="M0 0 Q14.4 -12.0 32.1 0 Q14.4 12.0 0 0 Z" fill="url(#pet)" stroke="#8a1606" stroke-width="0.5" transform="translate(78.7 46.6) rotate(293)"/>
<path d="M0 0 Q14.4 -12.0 32.1 0 Q14.4 12.0 0 0 Z" fill="url(#pet)" stroke="#8a1606" stroke-width="0.5" transform="translate(87.0 51.1) rotate(303)"/>
<path d="M0 0 Q14.9 -12.0 33.0 0 Q14.9 12.0 0 0 Z" fill="url(#pet)" stroke="#8a1606" stroke-width="0.5" transform="translate(96.5 61.3) rotate(324)"/>
<path d="M0 0 Q15.6 -12.0 34.6 0 Q15.6 12.0 0 0 Z" fill="url(#pet)" stroke="#8a1606" stroke-width="0.5" transform="translate(100.9 69.9) rotate(343)"/>
<path d="M0 0 Q14.1 -12.0 31.2 0 Q14.1 12.0 0 0 Z" fill="url(#pet)" stroke="#8a1606" stroke-width="0.5" transform="translate(102.9 80.3) rotate(362)"/>
<path d="M0 0 Q13.4 -12.0 29.8 0 Q13.4 12.0 0 0 Z" fill="url(#pet)" stroke="#8a1606" stroke-width="0.5" transform="translate(100.4 95.2) rotate(386)"/>
<path d="M0 0 Q12.2 -10.4 27.0 0 Q12.2 10.4 0 0 Z" fill="url(#pet)" stroke="#8a1606" stroke-width="0.5" transform="translate(63.9 53.9) rotate(266)"/>
<path d="M0 0 Q12.3 -10.4 27.2 0 Q12.3 10.4 0 0 Z" fill="url(#pet)" stroke="#8a1606" stroke-width="0.5" transform="translate(75.4 52.7) rotate(291)"/>
<path d="M0 0 Q12.7 -10.4 28.2 0 Q12.7 10.4 0 0 Z" fill="url(#pet)" stroke="#8a1606" stroke-width="0.5" transform="translate(80.3 56.4) rotate(300)"/>
<path d="M0 0 Q12.0 -10.4 26.7 0 Q12.0 10.4 0 0 Z" fill="url(#pet)" stroke="#8a1606" stroke-width="0.5" transform="translate(89.2 64.1) rotate(328)"/>
<path d="M0 0 Q12.4 -10.4 27.6 0 Q12.4 10.4 0 0 Z" fill="url(#pet)" stroke="#8a1606" stroke-width="0.5" transform="translate(92.4 70.3) rotate(339)"/>
<path d="M0 0 Q13.1 -10.4 29.1 0 Q13.1 10.4 0 0 Z" fill="url(#pet)" stroke="#8a1606" stroke-width="0.5" transform="translate(93.3 80.8) rotate(366)"/>
<path d="M0 0 Q13.4 -10.4 29.9 0 Q13.4 10.4 0 0 Z" fill="url(#pet)" stroke="#8a1606" stroke-width="0.5" transform="translate(91.1 89.4) rotate(381)"/>
<path d="M0 0 Q13.4 -10.4 29.8 0 Q13.4 10.4 0 0 Z" fill="url(#pet)" stroke="#8a1606" stroke-width="0.5" transform="translate(86.6 97.3) rotate(400)"/>
<path d="M0 0 Q13.1 -10.4 29.2 0 Q13.1 10.4 0 0 Z" fill="url(#pet)" stroke="#8a1606" stroke-width="0.5" transform="translate(82.2 102.6) rotate(423)"/>
<path d="M0 0 Q12.1 -10.4 26.9 0 Q12.1 10.4 0 0 Z" fill="url(#pet)" stroke="#8a1606" stroke-width="0.5" transform="translate(73.9 105.2) rotate(434)"/>
<path d="M0 0 Q11.7 -10.4 25.9 0 Q11.7 10.4 0 0 Z" fill="url(#pet)" stroke="#8a1606" stroke-width="0.5" transform="translate(61.0 104.9) rotate(460)"/>
<path d="M0 0 Q11.4 -10.4 25.4 0 Q11.4 10.4 0 0 Z" fill="url(#pet)" stroke="#8a1606" stroke-width="0.5" transform="translate(54.7 100.8) rotate(479)"/>
<path d="M0 0 Q11.2 -10.4 24.9 0 Q11.2 10.4 0 0 Z" fill="url(#pet)" stroke="#8a1606" stroke-width="0.5" transform="translate(47.6 95.8) rotate(506)"/>
<path d="M0 0 Q13.2 -10.4 29.3 0 Q13.2 10.4 0 0 Z" fill="url(#pet)" stroke="#8a1606" stroke-width="0.5" transform="translate(42.2 86.2) rotate(515)"/>
<path d="M0 0 Q12.7 -10.4 28.1 0 Q12.7 10.4 0 0 Z" fill="url(#pet)" stroke="#8a1606" stroke-width="0.5" transform="translate(41.6 78.8) rotate(539)"/>
<path d="M0 0 Q12.2 -10.4 27.0 0 Q12.2 10.4 0 0 Z" fill="url(#pet)" stroke="#8a1606" stroke-width="0.5" transform="translate(43.9 69.0) rotate(561)"/>
<path d="M0 0 Q11.2 -10.4 24.8 0 Q11.2 10.4 0 0 Z" fill="url(#pet)" stroke="#8a1606" stroke-width="0.5" transform="translate(49.4 59.8) rotate(583)"/>
<path d="M0 0 Q13.0 -10.4 28.9 0 Q13.0 10.4 0 0 Z" fill="url(#pet)" stroke="#8a1606" stroke-width="0.5" transform="translate(56.6 54.3) rotate(599)"/>
<path d="M0 0 Q9.6 -8.8 21.3 0 Q9.6 8.8 0 0 Z" fill="url(#pet)" stroke="#8a1606" stroke-width="0.5" transform="translate(71.7 60.7) rotate(280)"/>
<path d="M0 0 Q10.3 -8.8 22.9 0 Q10.3 8.8 0 0 Z" fill="url(#pet)" stroke="#8a1606" stroke-width="0.5" transform="translate(77.3 61.6) rotate(292)"/>
<path d="M0 0 Q9.5 -8.8 21.2 0 Q9.5 8.8 0 0 Z" fill="url(#pet)" stroke="#8a1606" stroke-width="0.5" transform="translate(82.2 67.8) rotate(325)"/>
<path d="M0 0 Q9.5 -8.8 21.1 0 Q9.5 8.8 0 0 Z" fill="url(#pet)" stroke="#8a1606" stroke-width="0.5" transform="translate(88.0 73.4) rotate(347)"/>
<path d="M0 0 Q9.6 -8.8 21.4 0 Q9.6 8.8 0 0 Z" fill="url(#pet)" stroke="#8a1606" stroke-width="0.5" transform="translate(86.8 79.8) rotate(373)"/>
<path d="M0 0 Q11.1 -8.8 24.6 0 Q11.1 8.8 0 0 Z" fill="url(#pet)" stroke="#8a1606" stroke-width="0.5" transform="translate(86.5 88.5) rotate(394)"/>
<path d="M0 0 Q11.4 -8.8 25.2 0 Q11.4 8.8 0 0 Z" fill="url(#pet)" stroke="#8a1606" stroke-width="0.5" transform="translate(83.3 92.7) rotate(405)"/>
<path d="M0 0 Q11.3 -8.8 25.1 0 Q11.3 8.8 0 0 Z" fill="url(#pet)" stroke="#8a1606" stroke-width="0.5" transform="translate(73.6 94.8) rotate(438)"/>
<path d="M0 0 Q9.7 -8.8 21.5 0 Q9.7 8.8 0 0 Z" fill="url(#pet)" stroke="#8a1606" stroke-width="0.5" transform="translate(69.8 96.2) rotate(450)"/>
<path d="M0 0 Q9.7 -8.8 21.5 0 Q9.7 8.8 0 0 Z" fill="url(#pet)" stroke="#8a1606" stroke-width="0.5" transform="translate(60.8 94.2) rotate(480)"/>
<path d="M0 0 Q9.9 -8.8 22.0 0 Q9.9 8.8 0 0 Z" fill="url(#pet)" stroke="#8a1606" stroke-width="0.5" transform="translate(54.6 93.1) rotate(488)"/>
<path d="M0 0 Q9.7 -8.8 21.7 0 Q9.7 8.8 0 0 Z" fill="url(#pet)" stroke="#8a1606" stroke-width="0.5" transform="translate(52.2 86.0) rotate(506)"/>
<path d="M0 0 Q11.2 -8.8 24.9 0 Q11.2 8.8 0 0 Z" fill="url(#pet)" stroke="#8a1606" stroke-width="0.5" transform="translate(48.1 81.0) rotate(534)"/>
<path d="M0 0 Q10.5 -8.8 23.3 0 Q10.5 8.8 0 0 Z" fill="url(#pet)" stroke="#8a1606" stroke-width="0.5" transform="translate(49.0 73.6) rotate(547)"/>
<path d="M0 0 Q10.5 -8.8 23.4 0 Q10.5 8.8 0 0 Z" fill="url(#pet)" stroke="#8a1606" stroke-width="0.5" transform="translate(54.2 66.6) rotate(585)"/>
<path d="M0 0 Q11.4 -8.8 25.4 0 Q11.4 8.8 0 0 Z" fill="url(#pet)" stroke="#8a1606" stroke-width="0.5" transform="translate(58.1 60.5) rotate(593)"/>
<path d="M0 0 Q9.9 -8.8 22.0 0 Q9.9 8.8 0 0 Z" fill="url(#pet)" stroke="#8a1606" stroke-width="0.5" transform="translate(65.6 59.8) rotate(626)"/>
<path d="M0 0 Q11.9 -10.2 26.4 0 Q11.9 10.2 0 0 Z" fill="url(#pet)" stroke="#8a1606" stroke-width="0.5" transform="translate(190.7 12.9) rotate(362)"/>
<path d="M0 0 Q12.8 -10.2 28.4 0 Q12.8 10.2 0 0 Z" fill="url(#pet)" stroke="#8a1606" stroke-width="0.5" transform="translate(191.5 20.1) rotate(366)"/>
<path d="M0 0 Q12.2 -10.2 27.2 0 Q12.2 10.2 0 0 Z" fill="url(#pet)" stroke="#8a1606" stroke-width="0.5" transform="translate(187.4 28.5) rotate(402)"/>
<path d="M0 0 Q10.9 -10.2 24.2 0 Q10.9 10.2 0 0 Z" fill="url(#pet)" stroke="#8a1606" stroke-width="0.5" transform="translate(178.9 34.9) rotate(410)"/>
<path d="M0 0 Q12.1 -10.2 26.8 0 Q12.1 10.2 0 0 Z" fill="url(#pet)" stroke="#8a1606" stroke-width="0.5" transform="translate(173.5 38.6) rotate(432)"/>
<path d="M0 0 Q12.4 -10.2 27.5 0 Q12.4 10.2 0 0 Z" fill="url(#pet)" stroke="#8a1606" stroke-width="0.5" transform="translate(161.6 37.4) rotate(456)"/>
<path d="M0 0 Q11.1 -10.2 24.6 0 Q11.1 10.2 0 0 Z" fill="url(#pet)" stroke="#8a1606" stroke-width="0.5" transform="translate(157.3 35.6) rotate(469)"/>
<path d="M0 0 Q12.2 -10.2 27.2 0 Q12.2 10.2 0 0 Z" fill="url(#pet)" stroke="#8a1606" stroke-width="0.5" transform="translate(148.9 31.1) rotate(496)"/>
<path d="M0 0 Q11.1 -10.2 24.8 0 Q11.1 10.2 0 0 Z" fill="url(#pet)" stroke="#8a1606" stroke-width="0.5" transform="translate(142.9 25.5) rotate(513)"/>
<path d="M0 0 Q11.1 -10.2 24.6 0 Q11.1 10.2 0 0 Z" fill="url(#pet)" stroke="#8a1606" stroke-width="0.5" transform="translate(141.7 13.6) rotate(535)"/>
<path d="M0 0 Q11.8 -10.2 26.2 0 Q11.8 10.2 0 0 Z" fill="url(#pet)" stroke="#8a1606" stroke-width="0.5" transform="translate(140.5 5.7) rotate(562)"/>
<path d="M0 0 Q12.2 -10.2 27.1 0 Q12.2 10.2 0 0 Z" fill="url(#pet)" stroke="#8a1606" stroke-width="0.5" transform="translate(146.7 0.9) rotate(577)"/>
<path d="M0 0 Q13.1 -10.2 29.1 0 Q13.1 10.2 0 0 Z" fill="url(#pet)" stroke="#8a1606" stroke-width="0.5" transform="translate(151.2 -7.2) rotate(594)"/>
<path d="M0 0 Q10.9 -10.2 24.3 0 Q10.9 10.2 0 0 Z" fill="url(#pet)" stroke="#8a1606" stroke-width="0.5" transform="translate(161.3 -9.8) rotate(625)"/>
<path d="M0 0 Q11.0 -10.2 24.4 0 Q11.0 10.2 0 0 Z" fill="url(#pet)" stroke="#8a1606" stroke-width="0.5" transform="translate(169.0 -10.7) rotate(633)"/>
<path d="M0 0 Q13.1 -10.2 29.1 0 Q13.1 10.2 0 0 Z" fill="url(#pet)" stroke="#8a1606" stroke-width="0.5" transform="translate(177.4 -6.3) rotate(660)"/>
<path d="M0 0 Q12.0 -10.2 26.8 0 Q12.0 10.2 0 0 Z" fill="url(#pet)" stroke="#8a1606" stroke-width="0.5" transform="translate(182.4 -3.6) rotate(675)"/>
<path d="M0 0 Q11.6 -10.2 25.7 0 Q11.6 10.2 0 0 Z" fill="url(#pet)" stroke="#8a1606" stroke-width="0.5" transform="translate(190.6 4.1) rotate(693)"/>
<path d="M0 0 Q11.2 -9.2 25.0 0 Q11.2 9.2 0 0 Z" fill="url(#pet)" stroke="#8a1606" stroke-width="0.5" transform="translate(160.9 35.3) rotate(108)"/>
<path d="M0 0 Q10.7 -9.2 23.8 0 Q10.7 9.2 0 0 Z" fill="url(#pet)" stroke="#8a1606" stroke-width="0.5" transform="translate(153.7 32.0) rotate(128)"/>
<path d="M0 0 Q9.9 -9.2 22.1 0 Q9.9 9.2 0 0 Z" fill="url(#pet)" stroke="#8a1606" stroke-width="0.5" transform="translate(148.0 23.2) rotate(148)"/>
<path d="M0 0 Q11.3 -9.2 25.2 0 Q11.3 9.2 0 0 Z" fill="url(#pet)" stroke="#8a1606" stroke-width="0.5" transform="translate(147.8 17.6) rotate(166)"/>
<path d="M0 0 Q10.3 -9.2 22.8 0 Q10.3 9.2 0 0 Z" fill="url(#pet)" stroke="#8a1606" stroke-width="0.5" transform="translate(145.0 8.5) rotate(198)"/>
<path d="M0 0 Q10.8 -9.2 24.1 0 Q10.8 9.2 0 0 Z" fill="url(#pet)" stroke="#8a1606" stroke-width="0.5" transform="translate(149.4 2.6) rotate(219)"/>
<path d="M0 0 Q10.2 -9.2 22.6 0 Q10.2 9.2 0 0 Z" fill="url(#pet)" stroke="#8a1606" stroke-width="0.5" transform="translate(153.3 -2.7) rotate(240)"/>
<path d="M0 0 Q10.2 -9.2 22.7 0 Q10.2 9.2 0 0 Z" fill="url(#pet)" stroke="#8a1606" stroke-width="0.5" transform="translate(162.8 -4.2) rotate(256)"/>
<path d="M0 0 Q10.4 -9.2 23.1 0 Q10.4 9.2 0 0 Z" fill="url(#pet)" stroke="#8a1606" stroke-width="0.5" transform="translate(169.8 -7.8) rotate(284)"/>
<path d="M0 0 Q11.7 -9.2 25.9 0 Q11.7 9.2 0 0 Z" fill="url(#pet)" stroke="#8a1606" stroke-width="0.5" transform="translate(176.6 -2.6) rotate(298)"/>
<path d="M0 0 Q11.8 -9.2 26.3 0 Q11.8 9.2 0 0 Z" fill="url(#pet)" stroke="#8a1606" stroke-width="0.5" transform="translate(182.5 0.7) rotate(324)"/>
<path d="M0 0 Q11.6 -9.2 25.7 0 Q11.6 9.2 0 0 Z" fill="url(#pet)" stroke="#8a1606" stroke-width="0.5" transform="translate(186.5 6.8) rotate(344)"/>
<path d="M0 0 Q10.4 -9.2 23.0 0 Q10.4 9.2 0 0 Z" fill="url(#pet)" stroke="#8a1606" stroke-width="0.5" transform="translate(187.3 14.6) rotate(363)"/>
<path d="M0 0 Q11.7 -9.2 25.9 0 Q11.7 9.2 0 0 Z" fill="url(#pet)" stroke="#8a1606" stroke-width="0.5" transform="translate(185.5 21.3) rotate(374)"/>
<path d="M0 0 Q11.7 -9.2 26.0 0 Q11.7 9.2 0 0 Z" fill="url(#pet)" stroke="#8a1606" stroke-width="0.5" transform="translate(179.9 26.1) rotate(395)"/>
<path d="M0 0 Q9.8 -9.2 21.8 0 Q9.8 9.2 0 0 Z" fill="url(#pet)" stroke="#8a1606" stroke-width="0.5" transform="translate(174.2 31.1) rotate(417)"/>
<path d="M0 0 Q11.3 -9.2 25.1 0 Q11.3 9.2 0 0 Z" fill="url(#pet)" stroke="#8a1606" stroke-width="0.5" transform="translate(166.4 34.9) rotate(452)"/>
<path d="M0 0 Q10.1 -8.1 22.6 0 Q10.1 8.1 0 0 Z" fill="url(#pet)" stroke="#8a1606" stroke-width="0.5" transform="translate(179.6 20.2) rotate(30)"/>
<path d="M0 0 Q10.3 -8.1 23.0 0 Q10.3 8.1 0 0 Z" fill="url(#pet)" stroke="#8a1606" stroke-width="0.5" transform="translate(174.8 24.5) rotate(56)"/>
<path d="M0 0 Q8.8 -8.1 19.6 0 Q8.8 8.1 0 0 Z" fill="url(#pet)" stroke="#8a1606" stroke-width="0.5" transform="translate(170.0 27.3) rotate(68)"/>
<path d="M0 0 Q9.8 -8.1 21.8 0 Q9.8 8.1 0 0 Z" fill="url(#pet)" stroke="#8a1606" stroke-width="0.5" transform="translate(167.0 30.8) rotate(92)"/>
<path d="M0 0 Q8.8 -8.1 19.5 0 Q8.8 8.1 0 0 Z" fill="url(#pet)" stroke="#8a1606" stroke-width="0.5" transform="translate(158.8 28.3) rotate(114)"/>
<path d="M0 0 Q9.2 -8.1 20.4 0 Q9.2 8.1 0 0 Z" fill="url(#pet)" stroke="#8a1606" stroke-width="0.5" transform="translate(154.9 26.2) rotate(127)"/>
<path d="M0 0 Q9.1 -8.1 20.3 0 Q9.1 8.1 0 0 Z" fill="url(#pet)" stroke="#8a1606" stroke-width="0.5" transform="translate(153.4 19.1) rotate(154)"/>
<path d="M0 0 Q10.4 -8.1 23.2 0 Q10.4 8.1 0 0 Z" fill="url(#pet)" stroke="#8a1606" stroke-width="0.5" transform="translate(151.1 13.1) rotate(180)"/>
<path d="M0 0 Q8.6 -8.1 19.2 0 Q8.6 8.1 0 0 Z" fill="url(#pet)" stroke="#8a1606" stroke-width="0.5" transform="translate(150.6 7.2) rotate(206)"/>
<path d="M0 0 Q9.2 -8.1 20.6 0 Q9.2 8.1 0 0 Z" fill="url(#pet)" stroke="#8a1606" stroke-width="0.5" transform="translate(155.3 3.2) rotate(230)"/>
<path d="M0 0 Q10.2 -8.1 22.7 0 Q10.2 8.1 0 0 Z" fill="url(#pet)" stroke="#8a1606" stroke-width="0.5" transform="translate(160.8 -0.7) rotate(246)"/>
<path d="M0 0 Q8.6 -8.1 19.1 0 Q8.6 8.1 0 0 Z" fill="url(#pet)" stroke="#8a1606" stroke-width="0.5" transform="translate(165.1 -2.7) rotate(262)"/>
<path d="M0 0 Q8.6 -8.1 19.1 0 Q8.6 8.1 0 0 Z" fill="url(#pet)" stroke="#8a1606" stroke-width="0.5" transform="translate(171.8 -1.4) rotate(298)"/>
<path d="M0 0 Q8.9 -8.1 19.9 0 Q8.9 8.1 0 0 Z" fill="url(#pet)" stroke="#8a1606" stroke-width="0.5" transform="translate(177.1 3.3) rotate(321)"/>
<path d="M0 0 Q9.1 -8.1 20.2 0 Q9.1 8.1 0 0 Z" fill="url(#pet)" stroke="#8a1606" stroke-width="0.5" transform="translate(179.8 8.6) rotate(344)"/>
<path d="M0 0 Q9.9 -8.1 22.0 0 Q9.9 8.1 0 0 Z" fill="url(#pet)" stroke="#8a1606" stroke-width="0.5" transform="translate(180.5 15.4) rotate(361)"/>
<path d="M0 0 Q8.8 -7.1 19.5 0 Q8.8 7.1 0 0 Z" fill="url(#pet)" stroke="#8a1606" stroke-width="0.5" transform="translate(154.9 14.9) rotate(169)"/>
<path d="M0 0 Q8.1 -7.1 17.9 0 Q8.1 7.1 0 0 Z" fill="url(#pet)" stroke="#8a1606" stroke-width="0.5" transform="translate(155.6 8.7) rotate(209)"/>
<path d="M0 0 Q7.6 -7.1 16.9 0 Q7.6 7.1 0 0 Z" fill="url(#pet)" stroke="#8a1606" stroke-width="0.5" transform="translate(159.5 6.3) rotate(236)"/>
<path d="M0 0 Q7.9 -7.1 17.6 0 Q7.9 7.1 0 0 Z" fill="url(#pet)" stroke="#8a1606" stroke-width="0.5" transform="translate(164.6 5.5) rotate(256)"/>
<path d="M0 0 Q8.9 -7.1 19.9 0 Q8.9 7.1 0 0 Z" fill="url(#pet)" stroke="#8a1606" stroke-width="0.5" transform="translate(169.0 3.9) rotate(284)"/>
<path d="M0 0 Q8.7 -7.1 19.4 0 Q8.7 7.1 0 0 Z" fill="url(#pet)" stroke="#8a1606" stroke-width="0.5" transform="translate(172.0 5.5) rotate(306)"/>
<path d="M0 0 Q8.0 -7.1 17.8 0 Q8.0 7.1 0 0 Z" fill="url(#pet)" stroke="#8a1606" stroke-width="0.5" transform="translate(176.2 9.5) rotate(334)"/>
<path d="M0 0 Q8.7 -7.1 19.3 0 Q8.7 7.1 0 0 Z" fill="url(#pet)" stroke="#8a1606" stroke-width="0.5" transform="translate(177.9 13.2) rotate(359)"/>
<path d="M0 0 Q8.4 -7.1 18.7 0 Q8.4 7.1 0 0 Z" fill="url(#pet)" stroke="#8a1606" stroke-width="0.5" transform="translate(175.6 17.8) rotate(386)"/>
<path d="M0 0 Q7.9 -7.1 17.5 0 Q7.9 7.1 0 0 Z" fill="url(#pet)" stroke="#8a1606" stroke-width="0.5" transform="translate(173.1 21.6) rotate(413)"/>
<path d="M0 0 Q8.9 -7.1 19.7 0 Q8.9 7.1 0 0 Z" fill="url(#pet)" stroke="#8a1606" stroke-width="0.5" transform="translate(168.8 23.4) rotate(437)"/>
<path d="M0 0 Q8.0 -7.1 17.8 0 Q8.0 7.1 0 0 Z" fill="url(#pet)" stroke="#8a1606" stroke-width="0.5" transform="translate(164.6 23.1) rotate(455)"/>
<path d="M0 0 Q7.8 -7.1 17.3 0 Q7.8 7.1 0 0 Z" fill="url(#pet)" stroke="#8a1606" stroke-width="0.5" transform="translate(160.3 21.2) rotate(485)"/>
<path d="M0 0 Q9.1 -7.1 20.1 0 Q9.1 7.1 0 0 Z" fill="url(#pet)" stroke="#8a1606" stroke-width="0.5" transform="translate(155.3 18.2) rotate(512)"/>
<path d="M0 0 Q7.4 -6.1 16.4 0 Q7.4 6.1 0 0 Z" fill="url(#pet)" stroke="#8a1606" stroke-width="0.5" transform="translate(172.2 18.4) rotate(40)"/>
<path d="M0 0 Q6.5 -6.1 14.4 0 Q6.5 6.1 0 0 Z" fill="url(#pet)" stroke="#8a1606" stroke-width="0.5" transform="translate(167.8 18.1) rotate(68)"/>
<path d="M0 0 Q6.9 -6.1 15.4 0 Q6.9 6.1 0 0 Z" fill="url(#pet)" stroke="#8a1606" stroke-width="0.5" transform="translate(165.7 19.2) rotate(86)"/>
<path d="M0 0 Q7.2 -6.1 16.1 0 Q7.2 6.1 0 0 Z" fill="url(#pet)" stroke="#8a1606" stroke-width="0.5" transform="translate(161.9 19.0) rotate(130)"/>
<path d="M0 0 Q6.9 -6.1 15.4 0 Q6.9 6.1 0 0 Z" fill="url(#pet)" stroke="#8a1606" stroke-width="0.5" transform="translate(162.1 15.7) rotate(158)"/>
<path d="M0 0 Q7.2 -6.1 15.9 0 Q7.2 6.1 0 0 Z" fill="url(#pet)" stroke="#8a1606" stroke-width="0.5" transform="translate(158.8 12.9) rotate(188)"/>
<path d="M0 0 Q7.4 -6.1 16.4 0 Q7.4 6.1 0 0 Z" fill="url(#pet)" stroke="#8a1606" stroke-width="0.5" transform="translate(161.9 10.6) rotate(215)"/>
<path d="M0 0 Q7.6 -6.1 16.8 0 Q7.6 6.1 0 0 Z" fill="url(#pet)" stroke="#8a1606" stroke-width="0.5" transform="translate(163.7 7.6) rotate(254)"/>
<path d="M0 0 Q6.8 -6.1 15.1 0 Q6.8 6.1 0 0 Z" fill="url(#pet)" stroke="#8a1606" stroke-width="0.5" transform="translate(166.9 7.8) rotate(278)"/>
<path d="M0 0 Q7.5 -6.1 16.6 0 Q7.5 6.1 0 0 Z" fill="url(#pet)" stroke="#8a1606" stroke-width="0.5" transform="translate(168.5 10.8) rotate(307)"/>
<path d="M0 0 Q6.9 -6.1 15.4 0 Q6.9 6.1 0 0 Z" fill="url(#pet)" stroke="#8a1606" stroke-width="0.5" transform="translate(171.8 11.8) rotate(335)"/>
<path d="M0 0 Q7.3 -6.1 16.2 0 Q7.3 6.1 0 0 Z" fill="url(#pet)" stroke="#8a1606" stroke-width="0.5" transform="translate(172.1 14.7) rotate(365)"/>
<path d="M0 0 Q5.7 -5.1 12.6 0 Q5.7 5.1 0 0 Z" fill="url(#pet)" stroke="#8a1606" stroke-width="0.5" transform="translate(167.2 13.4) rotate(336)"/>
<path d="M0 0 Q5.9 -5.1 13.0 0 Q5.9 5.1 0 0 Z" fill="url(#pet)" stroke="#8a1606" stroke-width="0.5" transform="translate(168.6 14.7) rotate(367)"/>
<path d="M0 0 Q5.8 -5.1 13.0 0 Q5.8 5.1 0 0 Z" fill="url(#pet)" stroke="#8a1606" stroke-width="0.5" transform="translate(167.2 15.5) rotate(419)"/>
<path d="M0 0 Q6.1 -5.1 13.5 0 Q6.1 5.1 0 0 Z" fill="url(#pet)" stroke="#8a1606" stroke-width="0.5" transform="translate(166.0 15.0) rotate(452)"/>
<path d="M0 0 Q5.8 -5.1 13.0 0 Q5.8 5.1 0 0 Z" fill="url(#pet)" stroke="#8a1606" stroke-width="0.5" transform="translate(165.1 14.9) rotate(500)"/>
<path d="M0 0 Q6.0 -5.1 13.4 0 Q6.0 5.1 0 0 Z" fill="url(#pet)" stroke="#8a1606" stroke-width="0.5" transform="translate(163.5 14.3) rotate(529)"/>
<path d="M0 0 Q6.4 -5.1 14.2 0 Q6.4 5.1 0 0 Z" fill="url(#pet)" stroke="#8a1606" stroke-width="0.5" transform="translate(164.5 13.0) rotate(568)"/>
<path d="M0 0 Q5.7 -5.1 12.7 0 Q5.7 5.1 0 0 Z" fill="url(#pet)" stroke="#8a1606" stroke-width="0.5" transform="translate(166.3 15.0) rotate(610)"/>
<path d="M0 0 Q6.0 -5.1 13.4 0 Q6.0 5.1 0 0 Z" fill="url(#pet)" stroke="#8a1606" stroke-width="0.5" transform="translate(166.1 13.6) rotate(649)"/>
<circle cx="68.5" cy="78" r="40" fill="url(#cg)"/>
<circle cx="68.5" cy="78" r="31" fill="#8a1608"/>
<ellipse cx="61.8" cy="109.7" rx="3.8" ry="2.6" fill="#d23c14" stroke="#4a0804" stroke-width="0.6" transform="rotate(102 61.8 109.7)"/>
<ellipse cx="56.4" cy="108.0" rx="3.8" ry="2.6" fill="#d23c14" stroke="#4a0804" stroke-width="0.6" transform="rotate(112 56.4 108.0)"/>
<ellipse cx="51.3" cy="105.5" rx="3.8" ry="2.6" fill="#d23c14" stroke="#4a0804" stroke-width="0.6" transform="rotate(122 51.3 105.5)"/>
<ellipse cx="46.8" cy="102.1" rx="3.8" ry="2.6" fill="#d23c14" stroke="#4a0804" stroke-width="0.6" transform="rotate(132 46.8 102.1)"/>
<ellipse cx="43.0" cy="97.9" rx="3.8" ry="2.6" fill="#d23c14" stroke="#4a0804" stroke-width="0.6" transform="rotate(142 43.0 97.9)"/>
<ellipse cx="39.9" cy="93.2" rx="3.8" ry="2.6" fill="#d23c14" stroke="#4a0804" stroke-width="0.6" transform="rotate(152 39.9 93.2)"/>
<ellipse cx="37.7" cy="88.0" rx="3.8" ry="2.6" fill="#d23c14" stroke="#4a0804" stroke-width="0.6" transform="rotate(162 37.7 88.0)"/>
<ellipse cx="36.4" cy="82.5" rx="3.8" ry="2.6" fill="#d23c14" stroke="#4a0804" stroke-width="0.6" transform="rotate(172 36.4 82.5)"/>
<ellipse cx="36.1" cy="76.9" rx="3.8" ry="2.6" fill="#d23c14" stroke="#4a0804" stroke-width="0.6" transform="rotate(182 36.1 76.9)"/>
<ellipse cx="36.8" cy="71.3" rx="3.8" ry="2.6" fill="#d23c14" stroke="#4a0804" stroke-width="0.6" transform="rotate(192 36.8 71.3)"/>
<ellipse cx="38.5" cy="65.9" rx="3.8" ry="2.6" fill="#d23c14" stroke="#4a0804" stroke-width="0.6" transform="rotate(202 38.5 65.9)"/>
<ellipse cx="41.0" cy="60.8" rx="3.8" ry="2.6" fill="#d23c14" stroke="#4a0804" stroke-width="0.6" transform="rotate(212 41.0 60.8)"/>
<ellipse cx="44.4" cy="56.3" rx="3.8" ry="2.6" fill="#d23c14" stroke="#4a0804" stroke-width="0.6" transform="rotate(222 44.4 56.3)"/>
<ellipse cx="48.6" cy="52.5" rx="3.8" ry="2.6" fill="#d23c14" stroke="#4a0804" stroke-width="0.6" transform="rotate(232 48.6 52.5)"/>
<ellipse cx="53.3" cy="49.4" rx="3.8" ry="2.6" fill="#d23c14" stroke="#4a0804" stroke-width="0.6" transform="rotate(242 53.3 49.4)"/>
<ellipse cx="58.5" cy="47.2" rx="3.8" ry="2.6" fill="#d23c14" stroke="#4a0804" stroke-width="0.6" transform="rotate(252 58.5 47.2)"/>
<ellipse cx="64.0" cy="45.9" rx="3.8" ry="2.6" fill="#d23c14" stroke="#4a0804" stroke-width="0.6" transform="rotate(262 64.0 45.9)"/>
<ellipse cx="69.6" cy="45.6" rx="3.8" ry="2.6" fill="#d23c14" stroke="#4a0804" stroke-width="0.6" transform="rotate(272 69.6 45.6)"/>
<ellipse cx="75.2" cy="46.3" rx="3.8" ry="2.6" fill="#d23c14" stroke="#4a0804" stroke-width="0.6" transform="rotate(282 75.2 46.3)"/>
<ellipse cx="80.6" cy="48.0" rx="3.8" ry="2.6" fill="#d23c14" stroke="#4a0804" stroke-width="0.6" transform="rotate(292 80.6 48.0)"/>
<ellipse cx="85.7" cy="50.5" rx="3.8" ry="2.6" fill="#d23c14" stroke="#4a0804" stroke-width="0.6" transform="rotate(302 85.7 50.5)"/>
<ellipse cx="90.2" cy="53.9" rx="3.8" ry="2.6" fill="#d23c14" stroke="#4a0804" stroke-width="0.6" transform="rotate(312 90.2 53.9)"/>
<ellipse cx="94.0" cy="58.1" rx="3.8" ry="2.6" fill="#d23c14" stroke="#4a0804" stroke-width="0.6" transform="rotate(322 94.0 58.1)"/>
<ellipse cx="97.1" cy="62.8" rx="3.8" ry="2.6" fill="#d23c14" stroke="#4a0804" stroke-width="0.6" transform="rotate(332 97.1 62.8)"/>
<ellipse cx="99.3" cy="68.0" rx="3.8" ry="2.6" fill="#d23c14" stroke="#4a0804" stroke-width="0.6" transform="rotate(342 99.3 68.0)"/>
<ellipse cx="100.6" cy="73.5" rx="3.8" ry="2.6" fill="#d23c14" stroke="#4a0804" stroke-width="0.6" transform="rotate(352 100.6 73.5)"/>
<ellipse cx="100.9" cy="79.1" rx="3.8" ry="2.6" fill="#d23c14" stroke="#4a0804" stroke-width="0.6" transform="rotate(362 100.9 79.1)"/>
<ellipse cx="100.2" cy="84.7" rx="3.8" ry="2.6" fill="#d23c14" stroke="#4a0804" stroke-width="0.6" transform="rotate(372 100.2 84.7)"/>
<ellipse cx="98.5" cy="90.1" rx="3.8" ry="2.6" fill="#d23c14" stroke="#4a0804" stroke-width="0.6" transform="rotate(382 98.5 90.1)"/>
<ellipse cx="96.0" cy="95.2" rx="3.8" ry="2.6" fill="#d23c14" stroke="#4a0804" stroke-width="0.6" transform="rotate(392 96.0 95.2)"/>
<ellipse cx="92.6" cy="99.7" rx="3.8" ry="2.6" fill="#d23c14" stroke="#4a0804" stroke-width="0.6" transform="rotate(402 92.6 99.7)"/>
<ellipse cx="88.4" cy="103.5" rx="3.8" ry="2.6" fill="#d23c14" stroke="#4a0804" stroke-width="0.6" transform="rotate(412 88.4 103.5)"/>
<ellipse cx="83.7" cy="106.6" rx="3.8" ry="2.6" fill="#d23c14" stroke="#4a0804" stroke-width="0.6" transform="rotate(422 83.7 106.6)"/>
<ellipse cx="78.5" cy="108.8" rx="3.8" ry="2.6" fill="#d23c14" stroke="#4a0804" stroke-width="0.6" transform="rotate(432 78.5 108.8)"/>
<ellipse cx="73.0" cy="110.1" rx="3.8" ry="2.6" fill="#d23c14" stroke="#4a0804" stroke-width="0.6" transform="rotate(442 73.0 110.1)"/>
<ellipse cx="67.4" cy="110.4" rx="3.8" ry="2.6" fill="#d23c14" stroke="#4a0804" stroke-width="0.6" transform="rotate(452 67.4 110.4)"/>
<ellipse cx="70.9" cy="104.9" rx="3.6" ry="2.5" fill="#c2300f" stroke="#4a0804" stroke-width="0.6" transform="rotate(85 70.9 104.9)"/>
<ellipse cx="65.4" cy="104.8" rx="3.6" ry="2.5" fill="#c2300f" stroke="#4a0804" stroke-width="0.6" transform="rotate(97 65.4 104.8)"/>
<ellipse cx="60.1" cy="103.6" rx="3.6" ry="2.5" fill="#c2300f" stroke="#4a0804" stroke-width="0.6" transform="rotate(108 60.1 103.6)"/>
<ellipse cx="55.1" cy="101.4" rx="3.6" ry="2.5" fill="#c2300f" stroke="#4a0804" stroke-width="0.6" transform="rotate(120 55.1 101.4)"/>
<ellipse cx="50.6" cy="98.2" rx="3.6" ry="2.5" fill="#c2300f" stroke="#4a0804" stroke-width="0.6" transform="rotate(131 50.6 98.2)"/>
<ellipse cx="46.9" cy="94.2" rx="3.6" ry="2.5" fill="#c2300f" stroke="#4a0804" stroke-width="0.6" transform="rotate(143 46.9 94.2)"/>
<ellipse cx="44.1" cy="89.5" rx="3.6" ry="2.5" fill="#c2300f" stroke="#4a0804" stroke-width="0.6" transform="rotate(155 44.1 89.5)"/>
<ellipse cx="42.3" cy="84.4" rx="3.6" ry="2.5" fill="#c2300f" stroke="#4a0804" stroke-width="0.6" transform="rotate(166 42.3 84.4)"/>
<ellipse cx="41.5" cy="79.0" rx="3.6" ry="2.5" fill="#c2300f" stroke="#4a0804" stroke-width="0.6" transform="rotate(178 41.5 79.0)"/>
<ellipse cx="41.9" cy="73.5" rx="3.6" ry="2.5" fill="#c2300f" stroke="#4a0804" stroke-width="0.6" transform="rotate(190 41.9 73.5)"/>
<ellipse cx="43.3" cy="68.3" rx="3.6" ry="2.5" fill="#c2300f" stroke="#4a0804" stroke-width="0.6" transform="rotate(201 43.3 68.3)"/>
<ellipse cx="45.8" cy="63.4" rx="3.6" ry="2.5" fill="#c2300f" stroke="#4a0804" stroke-width="0.6" transform="rotate(213 45.8 63.4)"/>
<ellipse cx="49.2" cy="59.1" rx="3.6" ry="2.5" fill="#c2300f" stroke="#4a0804" stroke-width="0.6" transform="rotate(224 49.2 59.1)"/>
<ellipse cx="53.4" cy="55.6" rx="3.6" ry="2.5" fill="#c2300f" stroke="#4a0804" stroke-width="0.6" transform="rotate(236 53.4 55.6)"/>
<ellipse cx="58.2" cy="53.0" rx="3.6" ry="2.5" fill="#c2300f" stroke="#4a0804" stroke-width="0.6" transform="rotate(248 58.2 53.0)"/>
<ellipse cx="63.4" cy="51.5" rx="3.6" ry="2.5" fill="#c2300f" stroke="#4a0804" stroke-width="0.6" transform="rotate(259 63.4 51.5)"/>
<ellipse cx="68.9" cy="51.0" rx="3.6" ry="2.5" fill="#c2300f" stroke="#4a0804" stroke-width="0.6" transform="rotate(271 68.9 51.0)"/>
<ellipse cx="74.3" cy="51.6" rx="3.6" ry="2.5" fill="#c2300f" stroke="#4a0804" stroke-width="0.6" transform="rotate(282 74.3 51.6)"/>
<ellipse cx="79.5" cy="53.3" rx="3.6" ry="2.5" fill="#c2300f" stroke="#4a0804" stroke-width="0.6" transform="rotate(294 79.5 53.3)"/>
<ellipse cx="84.2" cy="56.1" rx="3.6" ry="2.5" fill="#c2300f" stroke="#4a0804" stroke-width="0.6" transform="rotate(306 84.2 56.1)"/>
<ellipse cx="88.3" cy="59.7" rx="3.6" ry="2.5" fill="#c2300f" stroke="#4a0804" stroke-width="0.6" transform="rotate(317 88.3 59.7)"/>
<ellipse cx="91.6" cy="64.0" rx="3.6" ry="2.5" fill="#c2300f" stroke="#4a0804" stroke-width="0.6" transform="rotate(329 91.6 64.0)"/>
<ellipse cx="93.9" cy="69.0" rx="3.6" ry="2.5" fill="#c2300f" stroke="#4a0804" stroke-width="0.6" transform="rotate(340 93.9 69.0)"/>
<ellipse cx="95.2" cy="74.3" rx="3.6" ry="2.5" fill="#c2300f" stroke="#4a0804" stroke-width="0.6" transform="rotate(352 95.2 74.3)"/>
<ellipse cx="95.4" cy="79.7" rx="3.6" ry="2.5" fill="#c2300f" stroke="#4a0804" stroke-width="0.6" transform="rotate(364 95.4 79.7)"/>
<ellipse cx="94.5" cy="85.1" rx="3.6" ry="2.5" fill="#c2300f" stroke="#4a0804" stroke-width="0.6" transform="rotate(375 94.5 85.1)"/>
<ellipse cx="92.6" cy="90.2" rx="3.6" ry="2.5" fill="#c2300f" stroke="#4a0804" stroke-width="0.6" transform="rotate(387 92.6 90.2)"/>
<ellipse cx="89.6" cy="94.8" rx="3.6" ry="2.5" fill="#c2300f" stroke="#4a0804" stroke-width="0.6" transform="rotate(399 89.6 94.8)"/>
<ellipse cx="85.8" cy="98.7" rx="3.6" ry="2.5" fill="#c2300f" stroke="#4a0804" stroke-width="0.6" transform="rotate(410 85.8 98.7)"/>
<ellipse cx="81.3" cy="101.8" rx="3.6" ry="2.5" fill="#c2300f" stroke="#4a0804" stroke-width="0.6" transform="rotate(422 81.3 101.8)"/>
<ellipse cx="76.2" cy="103.9" rx="3.6" ry="2.5" fill="#c2300f" stroke="#4a0804" stroke-width="0.6" transform="rotate(433 76.2 103.9)"/>
<ellipse cx="76.6" cy="98.0" rx="3.4" ry="2.4" fill="#ac240c" stroke="#4a0804" stroke-width="0.6" transform="rotate(68 76.6 98.0)"/>
<ellipse cx="71.6" cy="99.4" rx="3.4" ry="2.4" fill="#ac240c" stroke="#4a0804" stroke-width="0.6" transform="rotate(82 71.6 99.4)"/>
<ellipse cx="66.4" cy="99.5" rx="3.4" ry="2.4" fill="#ac240c" stroke="#4a0804" stroke-width="0.6" transform="rotate(96 66.4 99.5)"/>
<ellipse cx="61.3" cy="98.4" rx="3.4" ry="2.4" fill="#ac240c" stroke="#4a0804" stroke-width="0.6" transform="rotate(110 61.3 98.4)"/>
<ellipse cx="56.6" cy="96.0" rx="3.4" ry="2.4" fill="#ac240c" stroke="#4a0804" stroke-width="0.6" transform="rotate(123 56.6 96.0)"/>
<ellipse cx="52.6" cy="92.7" rx="3.4" ry="2.4" fill="#ac240c" stroke="#4a0804" stroke-width="0.6" transform="rotate(137 52.6 92.7)"/>
<ellipse cx="49.6" cy="88.4" rx="3.4" ry="2.4" fill="#ac240c" stroke="#4a0804" stroke-width="0.6" transform="rotate(151 49.6 88.4)"/>
<ellipse cx="47.6" cy="83.6" rx="3.4" ry="2.4" fill="#ac240c" stroke="#4a0804" stroke-width="0.6" transform="rotate(165 47.6 83.6)"/>
<ellipse cx="46.9" cy="78.5" rx="3.4" ry="2.4" fill="#ac240c" stroke="#4a0804" stroke-width="0.6" transform="rotate(179 46.9 78.5)"/>
<ellipse cx="47.4" cy="73.3" rx="3.4" ry="2.4" fill="#ac240c" stroke="#4a0804" stroke-width="0.6" transform="rotate(193 47.4 73.3)"/>
<ellipse cx="49.2" cy="68.4" rx="3.4" ry="2.4" fill="#ac240c" stroke="#4a0804" stroke-width="0.6" transform="rotate(206 49.2 68.4)"/>
<ellipse cx="52.0" cy="64.0" rx="3.4" ry="2.4" fill="#ac240c" stroke="#4a0804" stroke-width="0.6" transform="rotate(220 52.0 64.0)"/>
<ellipse cx="55.9" cy="60.5" rx="3.4" ry="2.4" fill="#ac240c" stroke="#4a0804" stroke-width="0.6" transform="rotate(234 55.9 60.5)"/>
<ellipse cx="60.4" cy="58.0" rx="3.4" ry="2.4" fill="#ac240c" stroke="#4a0804" stroke-width="0.6" transform="rotate(248 60.4 58.0)"/>
<ellipse cx="65.4" cy="56.6" rx="3.4" ry="2.4" fill="#ac240c" stroke="#4a0804" stroke-width="0.6" transform="rotate(262 65.4 56.6)"/>
<ellipse cx="70.6" cy="56.5" rx="3.4" ry="2.4" fill="#ac240c" stroke="#4a0804" stroke-width="0.6" transform="rotate(276 70.6 56.5)"/>
<ellipse cx="75.7" cy="57.6" rx="3.4" ry="2.4" fill="#ac240c" stroke="#4a0804" stroke-width="0.6" transform="rotate(290 75.7 57.6)"/>
<ellipse cx="80.4" cy="60.0" rx="3.4" ry="2.4" fill="#ac240c" stroke="#4a0804" stroke-width="0.6" transform="rotate(303 80.4 60.0)"/>
<ellipse cx="84.4" cy="63.3" rx="3.4" ry="2.4" fill="#ac240c" stroke="#4a0804" stroke-width="0.6" transform="rotate(317 84.4 63.3)"/>
<ellipse cx="87.4" cy="67.6" rx="3.4" ry="2.4" fill="#ac240c" stroke="#4a0804" stroke-width="0.6" transform="rotate(331 87.4 67.6)"/>
<ellipse cx="89.4" cy="72.4" rx="3.4" ry="2.4" fill="#ac240c" stroke="#4a0804" stroke-width="0.6" transform="rotate(345 89.4 72.4)"/>
<ellipse cx="90.1" cy="77.5" rx="3.4" ry="2.4" fill="#ac240c" stroke="#4a0804" stroke-width="0.6" transform="rotate(359 90.1 77.5)"/>
<ellipse cx="89.6" cy="82.7" rx="3.4" ry="2.4" fill="#ac240c" stroke="#4a0804" stroke-width="0.6" transform="rotate(373 89.6 82.7)"/>
<ellipse cx="87.8" cy="87.6" rx="3.4" ry="2.4" fill="#ac240c" stroke="#4a0804" stroke-width="0.6" transform="rotate(386 87.8 87.6)"/>
<ellipse cx="85.0" cy="92.0" rx="3.4" ry="2.4" fill="#ac240c" stroke="#4a0804" stroke-width="0.6" transform="rotate(400 85.0 92.0)"/>
<ellipse cx="81.1" cy="95.5" rx="3.4" ry="2.4" fill="#ac240c" stroke="#4a0804" stroke-width="0.6" transform="rotate(414 81.1 95.5)"/>
<ellipse cx="78.7" cy="90.6" rx="3.2" ry="2.3" fill="#941a08" stroke="#4a0804" stroke-width="0.6" transform="rotate(51 78.7 90.6)"/>
<ellipse cx="74.5" cy="93.0" rx="3.2" ry="2.3" fill="#941a08" stroke="#4a0804" stroke-width="0.6" transform="rotate(68 74.5 93.0)"/>
<ellipse cx="69.8" cy="94.1" rx="3.2" ry="2.3" fill="#941a08" stroke="#4a0804" stroke-width="0.6" transform="rotate(85 69.8 94.1)"/>
<ellipse cx="65.0" cy="93.8" rx="3.2" ry="2.3" fill="#941a08" stroke="#4a0804" stroke-width="0.6" transform="rotate(102 65.0 93.8)"/>
<ellipse cx="60.5" cy="92.1" rx="3.2" ry="2.3" fill="#941a08" stroke="#4a0804" stroke-width="0.6" transform="rotate(120 60.5 92.1)"/>
<ellipse cx="56.7" cy="89.1" rx="3.2" ry="2.3" fill="#941a08" stroke="#4a0804" stroke-width="0.6" transform="rotate(137 56.7 89.1)"/>
<ellipse cx="54.0" cy="85.1" rx="3.2" ry="2.3" fill="#941a08" stroke="#4a0804" stroke-width="0.6" transform="rotate(154 54.0 85.1)"/>
<ellipse cx="52.5" cy="80.5" rx="3.2" ry="2.3" fill="#941a08" stroke="#4a0804" stroke-width="0.6" transform="rotate(171 52.5 80.5)"/>
<ellipse cx="52.5" cy="75.7" rx="3.2" ry="2.3" fill="#941a08" stroke="#4a0804" stroke-width="0.6" transform="rotate(188 52.5 75.7)"/>
<ellipse cx="53.9" cy="71.1" rx="3.2" ry="2.3" fill="#941a08" stroke="#4a0804" stroke-width="0.6" transform="rotate(205 53.9 71.1)"/>
<ellipse cx="56.5" cy="67.1" rx="3.2" ry="2.3" fill="#941a08" stroke="#4a0804" stroke-width="0.6" transform="rotate(222 56.5 67.1)"/>
<ellipse cx="60.3" cy="64.0" rx="3.2" ry="2.3" fill="#941a08" stroke="#4a0804" stroke-width="0.6" transform="rotate(240 60.3 64.0)"/>
<ellipse cx="64.8" cy="62.2" rx="3.2" ry="2.3" fill="#941a08" stroke="#4a0804" stroke-width="0.6" transform="rotate(257 64.8 62.2)"/>
<ellipse cx="69.6" cy="61.8" rx="3.2" ry="2.3" fill="#941a08" stroke="#4a0804" stroke-width="0.6" transform="rotate(274 69.6 61.8)"/>
<ellipse cx="74.3" cy="62.9" rx="3.2" ry="2.3" fill="#941a08" stroke="#4a0804" stroke-width="0.6" transform="rotate(291 74.3 62.9)"/>
<ellipse cx="78.5" cy="65.3" rx="3.2" ry="2.3" fill="#941a08" stroke="#4a0804" stroke-width="0.6" transform="rotate(308 78.5 65.3)"/>
<ellipse cx="81.8" cy="68.8" rx="3.2" ry="2.3" fill="#941a08" stroke="#4a0804" stroke-width="0.6" transform="rotate(325 81.8 68.8)"/>
<ellipse cx="83.9" cy="73.1" rx="3.2" ry="2.3" fill="#941a08" stroke="#4a0804" stroke-width="0.6" transform="rotate(342 83.9 73.1)"/>
<ellipse cx="84.7" cy="77.9" rx="3.2" ry="2.3" fill="#941a08" stroke="#4a0804" stroke-width="0.6" transform="rotate(360 84.7 77.9)"/>
<ellipse cx="84.0" cy="82.7" rx="3.2" ry="2.3" fill="#941a08" stroke="#4a0804" stroke-width="0.6" transform="rotate(377 84.0 82.7)"/>
<ellipse cx="82.0" cy="87.0" rx="3.2" ry="2.3" fill="#941a08" stroke="#4a0804" stroke-width="0.6" transform="rotate(394 82.0 87.0)"/>
<ellipse cx="77.5" cy="84.0" rx="3.0" ry="2.1" fill="#7a1006" stroke="#4a0804" stroke-width="0.6" transform="rotate(34 77.5 84.0)"/>
<ellipse cx="74.5" cy="87.0" rx="3.0" ry="2.1" fill="#7a1006" stroke="#4a0804" stroke-width="0.6" transform="rotate(56 74.5 87.0)"/>
<ellipse cx="70.6" cy="88.6" rx="3.0" ry="2.1" fill="#7a1006" stroke="#4a0804" stroke-width="0.6" transform="rotate(79 70.6 88.6)"/>
<ellipse cx="66.3" cy="88.6" rx="3.0" ry="2.1" fill="#7a1006" stroke="#4a0804" stroke-width="0.6" transform="rotate(102 66.3 88.6)"/>
<ellipse cx="62.5" cy="87.0" rx="3.0" ry="2.1" fill="#7a1006" stroke="#4a0804" stroke-width="0.6" transform="rotate(124 62.5 87.0)"/>
<ellipse cx="59.5" cy="84.0" rx="3.0" ry="2.1" fill="#7a1006" stroke="#4a0804" stroke-width="0.6" transform="rotate(146 59.5 84.0)"/>
<ellipse cx="57.9" cy="80.1" rx="3.0" ry="2.1" fill="#7a1006" stroke="#4a0804" stroke-width="0.6" transform="rotate(169 57.9 80.1)"/>
<ellipse cx="57.9" cy="75.8" rx="3.0" ry="2.1" fill="#7a1006" stroke="#4a0804" stroke-width="0.6" transform="rotate(192 57.9 75.8)"/>
<ellipse cx="59.5" cy="72.0" rx="3.0" ry="2.1" fill="#7a1006" stroke="#4a0804" stroke-width="0.6" transform="rotate(214 59.5 72.0)"/>
<ellipse cx="62.5" cy="69.0" rx="3.0" ry="2.1" fill="#7a1006" stroke="#4a0804" stroke-width="0.6" transform="rotate(236 62.5 69.0)"/>
<ellipse cx="66.4" cy="67.4" rx="3.0" ry="2.1" fill="#7a1006" stroke="#4a0804" stroke-width="0.6" transform="rotate(259 66.4 67.4)"/>
<ellipse cx="70.7" cy="67.4" rx="3.0" ry="2.1" fill="#7a1006" stroke="#4a0804" stroke-width="0.6" transform="rotate(282 70.7 67.4)"/>
<ellipse cx="74.5" cy="69.0" rx="3.0" ry="2.1" fill="#7a1006" stroke="#4a0804" stroke-width="0.6" transform="rotate(304 74.5 69.0)"/>
<ellipse cx="77.5" cy="72.0" rx="3.0" ry="2.1" fill="#7a1006" stroke="#4a0804" stroke-width="0.6" transform="rotate(326 77.5 72.0)"/>
<ellipse cx="79.1" cy="75.9" rx="3.0" ry="2.1" fill="#7a1006" stroke="#4a0804" stroke-width="0.6" transform="rotate(349 79.1 75.9)"/>
<ellipse cx="79.1" cy="80.2" rx="3.0" ry="2.1" fill="#7a1006" stroke="#4a0804" stroke-width="0.6" transform="rotate(372 79.1 80.2)"/>
<ellipse cx="73.7" cy="79.6" rx="2.8" ry="2.0" fill="#5a0a04" stroke="#4a0804" stroke-width="0.6" transform="rotate(17 73.7 79.6)"/>
<ellipse cx="72.0" cy="82.1" rx="2.8" ry="2.0" fill="#5a0a04" stroke="#4a0804" stroke-width="0.6" transform="rotate(50 72.0 82.1)"/>
<ellipse cx="69.2" cy="83.4" rx="2.8" ry="2.0" fill="#5a0a04" stroke="#4a0804" stroke-width="0.6" transform="rotate(82 69.2 83.4)"/>
<ellipse cx="66.2" cy="82.9" rx="2.8" ry="2.0" fill="#5a0a04" stroke="#4a0804" stroke-width="0.6" transform="rotate(115 66.2 82.9)"/>
<ellipse cx="63.9" cy="80.9" rx="2.8" ry="2.0" fill="#5a0a04" stroke="#4a0804" stroke-width="0.6" transform="rotate(148 63.9 80.9)"/>
<ellipse cx="63.1" cy="77.9" rx="2.8" ry="2.0" fill="#5a0a04" stroke="#4a0804" stroke-width="0.6" transform="rotate(181 63.1 77.9)"/>
<ellipse cx="64.0" cy="75.0" rx="2.8" ry="2.0" fill="#5a0a04" stroke="#4a0804" stroke-width="0.6" transform="rotate(213 64.0 75.0)"/>
<ellipse cx="66.3" cy="73.1" rx="2.8" ry="2.0" fill="#5a0a04" stroke="#4a0804" stroke-width="0.6" transform="rotate(246 66.3 73.1)"/>
<ellipse cx="69.3" cy="72.7" rx="2.8" ry="2.0" fill="#5a0a04" stroke="#4a0804" stroke-width="0.6" transform="rotate(279 69.3 72.7)"/>
<ellipse cx="72.1" cy="74.0" rx="2.8" ry="2.0" fill="#5a0a04" stroke="#4a0804" stroke-width="0.6" transform="rotate(312 72.1 74.0)"/>
<ellipse cx="73.7" cy="76.5" rx="2.8" ry="2.0" fill="#5a0a04" stroke="#4a0804" stroke-width="0.6" transform="rotate(344 73.7 76.5)"/>
<circle cx="68.5" cy="78" r="2.5" fill="#200402"/>
</svg></div>
<div class="a" style="left:262px;top:155px;width:184px;height:139px;border:2px solid #2d3236;background:#8a8276;overflow:hidden" id="koala"><svg style="left:0;top:0" width="180" height="135" viewBox="0 0 180 135">
<defs>
<filter id="fur" x="0" y="0" width="100%" height="100%">
  <feTurbulence type="fractalNoise" baseFrequency="1.1" numOctaves="1" seed="9" result="n"/>
  <feColorMatrix in="n" type="matrix" values="0 0 0 0 0  0 0 0 0 0  0 0 0 0 0  0 0 0 -2.2 1.25" result="a"/>
  <feComposite in="SourceGraphic" in2="a" operator="in"/>
</filter>
<filter id="bl1" x="-10%" y="-10%" width="120%" height="120%"><feGaussianBlur stdDeviation="1.3"/></filter>
<filter id="bl3" x="-30%" y="-30%" width="160%" height="160%"><feGaussianBlur stdDeviation="3"/></filter>
<filter id="bl5" x="-30%" y="-30%" width="160%" height="160%"><feGaussianBlur stdDeviation="5"/></filter>
<radialGradient id="head" cx="0.5" cy="0.45" r="0.6"><stop offset="0" stop-color="#aeaca8"/><stop offset="0.75" stop-color="#96948f"/><stop offset="1" stop-color="#7c7a76"/></radialGradient>
<radialGradient id="nose" cx="0.45" cy="0.3" r="0.75"><stop offset="0" stop-color="#505050"/><stop offset="0.5" stop-color="#2a2a2a"/><stop offset="1" stop-color="#1c1c1c"/></radialGradient>
</defs>
<rect width="180" height="135" fill="#a19380"/>
<g filter="url(#bl5)">
  <rect x="0" y="0" width="60" height="30" fill="#968674"/>
  <rect x="84" y="-5" width="16" height="35" fill="#c4b8a4"/>
  <path d="M108 0 L118 0 L122 28 L112 28 Z" fill="#8c9a6a" opacity="0.8"/>
  <path d="M150 0 L165 0 L160 18 Z" fill="#8c9a6a" opacity="0.7"/>
  <rect x="150" y="70" width="30" height="65" fill="#a89a86"/>
</g>
<!-- branches -->
<g filter="url(#bl1)">
  <path d="M14 0 L36 0 L30 30 L24 62 L16 118 L0 120 L0 40 L6 20 Z" fill="#6e5444"/>
  <path d="M26 135 L28 108 L36 98 L44 104 L44 120 L42 135 Z" fill="#6e4c36"/>
</g>
<!-- body -->
<g filter="url(#bl1)">
  <path d="M67 135 L74 120 Q100 118 130 104 Q146 92 152 84 Q166 100 170 135 Z" fill="#3a3a3a"/>
</g>
<!-- arm -->
<g filter="url(#bl1)">
  <path d="M16 60 Q26 50 38 58 Q48 72 56 88 Q64 100 68 112 L68 135 L42 135 Q38 112 30 100 Q18 88 16 60 Z" fill="#d6d0c6"/>
  <path d="M14 62 Q22 56 30 62 L32 78 Q28 90 20 88 Q12 80 14 62 Z" fill="#262626"/>
</g>
<!-- ears -->
<g filter="url(#bl1)">
  <ellipse cx="50" cy="31" rx="36" ry="29" fill="#a6a4a0" transform="rotate(-22 50 31)"/>
  <ellipse cx="158" cy="46" rx="24" ry="35" fill="#a09e9a" transform="rotate(8 158 46)"/>
</g>
<g filter="url(#bl5)">
  <ellipse cx="60" cy="38" rx="17" ry="20" fill="#333" opacity="0.85"/>
  <ellipse cx="148" cy="46" rx="12" ry="24" fill="#333" opacity="0.8"/>
</g>
<!-- head -->
<g filter="url(#bl1)">
  <ellipse cx="101" cy="71" rx="46" ry="50" fill="url(#head)"/>
  <ellipse cx="88" cy="107" rx="15" ry="8" fill="#d2d0cc"/><path d="M62 96 Q80 112 110 112 L104 122 Q80 124 66 118 Z" fill="#cfcac2"/>
</g>
<!-- fur texture -->
<g filter="url(#fur)" opacity="0.6">
  <ellipse cx="101" cy="71" rx="48" ry="52" fill="#2e2e2e"/>
  <ellipse cx="50" cy="31" rx="37" ry="30" fill="#3a3a3a" transform="rotate(-22 50 31)"/>
  <ellipse cx="158" cy="46" rx="25" ry="36" fill="#3a3a3a" transform="rotate(8 158 46)"/>
  <path d="M64 135 L72 118 Q100 116 130 102 Q146 90 152 84 Q166 100 170 135 Z" fill="#9a9a9a"/>
  <path d="M16 60 Q26 50 38 58 Q48 72 56 88 Q64 100 68 112 L68 135 L42 135 Q38 112 30 100 Q18 88 16 60 Z" fill="#8a8a8a" opacity="0.5"/>
</g>
<!-- nose -->
<path d="M76 68 Q85 63 94 67 Q100 78 99 92 Q97 104 86 104 Q74 103 72 92 Q71 78 76 68 Z" fill="url(#nose)" filter="url(#bl1)"/>
<!-- eyes -->
<circle cx="68" cy="67" r="2.8" fill="#22180f"/>
<circle cx="116" cy="75" r="3" fill="#22180f"/>
<!-- small paw bottom-left -->
<g filter="url(#bl1)">
  <ellipse cx="8" cy="122" rx="7" ry="13" fill="#bdb8b0"/>
  <ellipse cx="8" cy="125" rx="4" ry="6" fill="#4a4a48"/>
  <ellipse cx="23" cy="126" rx="6" ry="7" fill="#9a968e"/>
  <rect x="0" y="130" width="30" height="5" fill="#d8d4cc"/>
</g>
</svg>
</div>

<!-- bottom tabs -->
<div class="a" style="left:0;top:347px;width:519px;height:29px;background:#efeff2"></div>
<div class="a" style="left:0;top:353px;width:76px;height:22px;border:1px dotted #3399ff;background:#fbfbfb"></div>
<svg style="left:0;top:347px" width="80" height="29">
  <path d="M11 10 L11 21 L13.5 18.5 L16 23 L17.6 22 L15.3 17.8 L18.5 17.5 Z" fill="#3c3c3c"/>
  <circle cx="9" cy="22.5" r="2" fill="#3c3c3c"/>
  <path d="M5.8 20.5 L4.3 22.5 L5.8 24.5 M12.2 20.5 L13.7 22.5 L12.2 24.5" stroke="#777" stroke-width="1" fill="none"/>
  <line x1="79.5" y1="8" x2="79.5" y2="26" stroke="#cccedb" stroke-width="1"/>
</svg>
<div class="t" style="left:27px;top:358px;letter-spacing:-0.17px">Inspect</div>
<div class="t" style="left:95px;top:360px;color:#717171;letter-spacing:-0.43px">HTML</div>
<div class="a" style="left:134px;top:356px;width:39px;height:20px;background:#007acc"></div>
<div class="t" style="left:142px;top:360px;color:#fff;letter-spacing:-0.5px">Files</div>
<svg style="left:500px;top:356px" width="19" height="20">
  <path d="M4.5 5.5 L8.3 9 L12 5.5 M4.5 9.5 L8.3 13 L12 9.5" stroke="#1e1e1e" stroke-width="1" fill="none"/>
</svg>

<div class="a" style="left:0;top:376px;width:519px;height:125px;background:#f5f5f5"></div>
<div class="t" style="left:7px;top:386px;font-weight:bold;letter-spacing:-0.1px">Layout</div>
<div class="t" style="left:23px;top:410px;color:#1e7ac8;letter-spacing:0.12px">~/Views/Home/Index.cshtml</div>
<div class="t" style="left:23px;top:429px;color:#1e7ac8;letter-spacing:-0.02px">~/Views/Shared/_Layout.cshtml</div>
<div class="t" style="left:23px;top:448px;color:#1e7ac8;letter-spacing:-0.02px">~/Views/Shared/_LoginPartial.cshtml</div>

<!-- splitter -->
<div class="a" style="left:519px;top:24px;width:2px;height:477px;background:#f7f7f9"></div>
<div class="a" style="left:521px;top:24px;width:2px;height:477px;background:#dfe0e4"></div>
<div class="a" style="left:523px;top:24px;width:2px;height:477px;background:#ebebee"></div>

<!-- bottom strip -->
<div class="a" style="left:0;top:501px;width:1185px;height:6px;background:#ccced8"></div>

<!-- ================= RIGHT PANEL ================= -->
<div class="a" style="left:1059px;top:3px;width:114px;height:20px;background:#ccced8"></div>
<div class="t" style="left:1063px;top:7px;color:#717171;letter-spacing:-0.02px">Index.cshtml</div>
<svg style="left:1059px;top:0" width="126" height="24">
  <rect x="83" y="11" width="7" height="5" fill="#717171"/>
  <rect x="82" y="15.8" width="9" height="1.1" fill="#717171"/>
  <path d="M81 9.3 L83.2 11.3 M84.5 9 V11" stroke="#717171" stroke-width="1"/>
  <path d="M99.5 9.3 L108.2 16.8 M108.2 9.3 L99.5 16.8" stroke="#717171" stroke-width="1.4"/>
  <path d="M117 12 H124.8 L120.9 16 Z" fill="#717171"/>
</svg>
<div class="a" style="left:525px;top:22px;width:660px;height:2px;background:#ccced8"></div>

<div class="a" style="left:525px;top:24px;width:645px;height:435px;background:#fff"></div>
<div class="a" style="left:525px;top:24px;width:17px;height:435px;background:#e6e7e8"></div>
<!-- v scrollbar -->
<div class="a" style="left:1170px;top:24px;width:15px;height:435px;background:#e8e8ec"></div>
<div class="a" style="left:1171px;top:24px;width:14px;height:16px;background:#f5f5f5;border-bottom:1px solid #d8d8dc"></div>
<div class="a" style="left:1174px;top:118px;width:9px;height:194px;background:#d0d1d7"></div>
<svg style="left:1170px;top:24px" width="15" height="435">
  <path d="M2 7.5 H14 M2 9.5 H14" stroke="#1e1e1e" stroke-width="1"/>
  <path d="M8 3 V6.5 M8 10.5 V14.5 M6 5 L8 3 L10 5 M6 12.5 L8 14.5 L10 12.5" stroke="#1e1e1e" stroke-width="1.1" fill="none"/>
  <path d="M4 28 L8.5 23.5 L13 28 Z" fill="#868999"/>
  <path d="M4 424 L8.5 428.5 L13 424 Z" fill="#868999"/>
</svg>

<!-- code -->
<div class="a" style="left:561px;top:24px;width:609px;height:435px;overflow:hidden">
  <div class="a" style="left:95px;top:1px;width:105px;height:16px;background:#e9ecf2"></div>
  <div class="a" style="left:88px;top:1px;width:7px;height:16px;background:#ffff00"></div>
  <div class="a" style="left:0;top:145px;width:179px;height:16px;background:#e9ecf2"></div>
  <svg style="left:-561px;top:-24px" width="1170" height="459">
    <path d="M565,201 H692 V217 H971 V233 H1180 V249 H629 V264.5 H957 V281 H600 V297 H555 V217 H565 Z" fill="#d6e0ed"/>
    <rect x="656" y="217" width="7" height="16" fill="#ffff00"/>
    <rect x="663" y="217" width="287" height="16" fill="#ccd8e8"/>
    <rect x="691" y="233" width="7" height="16" fill="#ffff00"/>
    <rect x="698" y="233" width="77" height="16" fill="#ccd8e8"/>
    <rect x="824" y="233" width="7" height="16" fill="#ffff00"/>
    <rect x="831" y="233" width="287" height="16" fill="#ccd8e8"/>
    <rect x="817" y="265" width="7" height="16" fill="#ffff00"/>
    <rect x="824" y="265" width="77" height="16" fill="#ccd8e8"/>
    <path d="M565,201 H692 V217 H971 V233 H1180 V249 H629 V264.5 H957 V281 H600 V297 H555 V217 H565 Z" fill="none" stroke="#3f8fd9" stroke-width="2"/>
    <rect x="628" y="248" width="550" height="17" fill="#fff"/>
    <path d="M1180,249 H629 V264.5 H957" fill="none" stroke="#3f8fd9" stroke-width="2"/>
    </svg>
  <div class="code" style="left:-52px;top:1px">                <span class="dl">&lt;</span><span class="el">h2</span><span class="dl">&gt;</span><span class="rz">@</span><span class="rg">ViewBag.Message</span><span class="dl">&lt;/</span><span class="el">h2</span><span class="dl">&gt;</span>
            <span class="dl">&lt;/</span><span class="el">hgroup</span><span class="dl">&gt;</span>
            <span class="dl">&lt;</span><span class="el">p</span><span class="dl">&gt;</span>
            <span class="dl">&lt;/</span><span class="el">p</span><span class="dl">&gt;</span>
        <span class="dl">&lt;/</span><span class="el">div</span><span class="dl">&gt;</span>
    <span class="dl">&lt;/</span><span class="el">section</span><span class="dl">&gt;</span>


<span class="dl">&lt;</span><span class="el">ul</span> <span class="at">class</span><span class="av">="thumbnails"&gt;</span>
    <span class="kw">@</span><span class="kw">foreach</span><span class="bk"> (</span><span class="kw">var</span><span class="bk"> photo </span><span class="kw">in</span><span class="bk"> Model)</span>

        <span class="dl">&lt;</span><span class="el">li</span> <span class="at">class</span><span class="av">=</span><span class="av">"item"</span><span class="dl">&gt;</span>
            <span class="dl">&lt;</span><span class="el">a</span> <span class="at">href</span><span class="av">="</span><span class="rz">@</span><span class="bk">Url.Content(</span><span class="st">"~/photos/"</span><span class="bk"> + photo.FileName)</span><span class="av">"&gt;</span>
                <span class="dl">&lt;</span><span class="el">img</span> <span class="at">alt</span><span class="av">="</span><span class="rz">@</span><span class="bk">photo.Title</span><span class="av">"</span> <span class="at">src</span><span class="av">="</span><span class="rz">@</span><span class="bk">Url.Content(</span><span class="st">"~/photos/"</span><span class="bk"> + photo.FileName)</span><span class="av">"</span> <span class="at">class</span><span class="av">="thumbnail-border" /&gt;</span>
            <span class="dl">&lt;/</span><span class="el">a</span><span class="dl">&gt;</span>
                <span class="dl">&lt;</span><span class="el">span</span> <span class="at">class</span><span class="av">="image-overlay"&gt;</span><span class="rz">@</span><span class="bk">photo.Title</span><span class="dl">&lt;/</span><span class="el">span</span><span class="dl">&gt;</span>
        <span class="dl">&lt;/</span><span class="el">li</span><span class="dl">&gt;</span>

</div>
</div>
<!-- outline margin -->
<svg style="left:542px;top:24px" width="19" height="435">
  <path d="M15.5 0 V97.5 H19 M15.5 33.5 H19 M15.5 81.5 H19" stroke="#a5a5a5" stroke-width="1" fill="none"/>
  <rect x="10.5" y="133.5" width="8" height="8" fill="#fff" stroke="#a5a5a5" stroke-width="1"/>
  <path d="M12.5 137.5 H16.5" stroke="#1e1e1e" stroke-width="1"/>
  <path d="M15.5 142 V305.5 H19" stroke="#a5a5a5" stroke-width="1" fill="none"/>
</svg>

<!-- h scrollbar -->
<div class="a" style="left:525px;top:459px;width:660px;height:17px;background:#e8e8ec"></div>
<div class="a" style="left:526px;top:459px;width:58px;height:17px;background:#fcfcfc;border:1px solid #e3e3e8"></div>
<div class="t" style="left:527px;top:461px;font-size:11px;letter-spacing:-0.3px">100 %</div>
<svg style="left:525px;top:459px" width="660" height="17">
  <path d="M51.5 8 H57.5 L54.5 11 Z" fill="#717171"/>
  <path d="M71.5 3.5 V13.5 L66 8.5 Z" fill="#868999"/>
  <path d="M634 3.5 V13.5 L639.5 8.5 Z" fill="#868999"/>
</svg>
<div class="a" style="left:629px;top:463px;width:303px;height:9px;background:#d0d1d7"></div>

<!-- bottom bar -->
<div class="a" style="left:525px;top:476px;width:660px;height:25px;background:#f5f5f5"></div>
<div class="a" style="left:529px;top:478px;width:69px;height:21px;border:1px solid #3399ff"></div>
<svg style="left:525px;top:476px" width="660" height="25">
  <path d="M13.5 10 L11 12 L13.5 14 M15.5 10 L18 12 L15.5 14" stroke="#3c3c3c" stroke-width="1.2" fill="none"/>
  <rect x="95.5" y="2.5" width="11" height="20" fill="none" stroke="#6d6d6d" stroke-width="1"/>
  <path d="M103 8 V16.5 L98 12.25 Z" fill="#6d6d6d"/>
  <rect x="110.5" y="2.5" width="95" height="20" fill="none" stroke="#6d6d6d" stroke-width="1"/>
  <rect x="267.5" y="2.5" width="27" height="20" fill="none" stroke="#6d6d6d" stroke-width="1"/>
  <rect x="298.5" y="2.5" width="141" height="20" fill="none" stroke="#6d6d6d" stroke-width="1"/>
  <rect x="640.5" y="2.5" width="11" height="20" fill="none" stroke="#6d6d6d" stroke-width="1"/>
  <path d="M644 8 V16.5 L649 12.25 Z" fill="#6d6d6d"/>
</svg>
<div class="t" style="left:550px;top:482px;letter-spacing:-0.48px">Source</div>
<div class="t" style="left:640px;top:482px;letter-spacing:0.21px">&lt;ul.thumbnails&gt;</div>
<div class="t" style="left:738px;top:482px;letter-spacing:0.3px">&lt;li.item&gt;</div>
<div class="t" style="left:797px;top:482px;letter-spacing:0.1px">&lt;a&gt;</div>
<div class="t" style="left:828px;top:482px;letter-spacing:0.29px">&lt;img.thumbnail-border&gt;</div>

</body></html>
